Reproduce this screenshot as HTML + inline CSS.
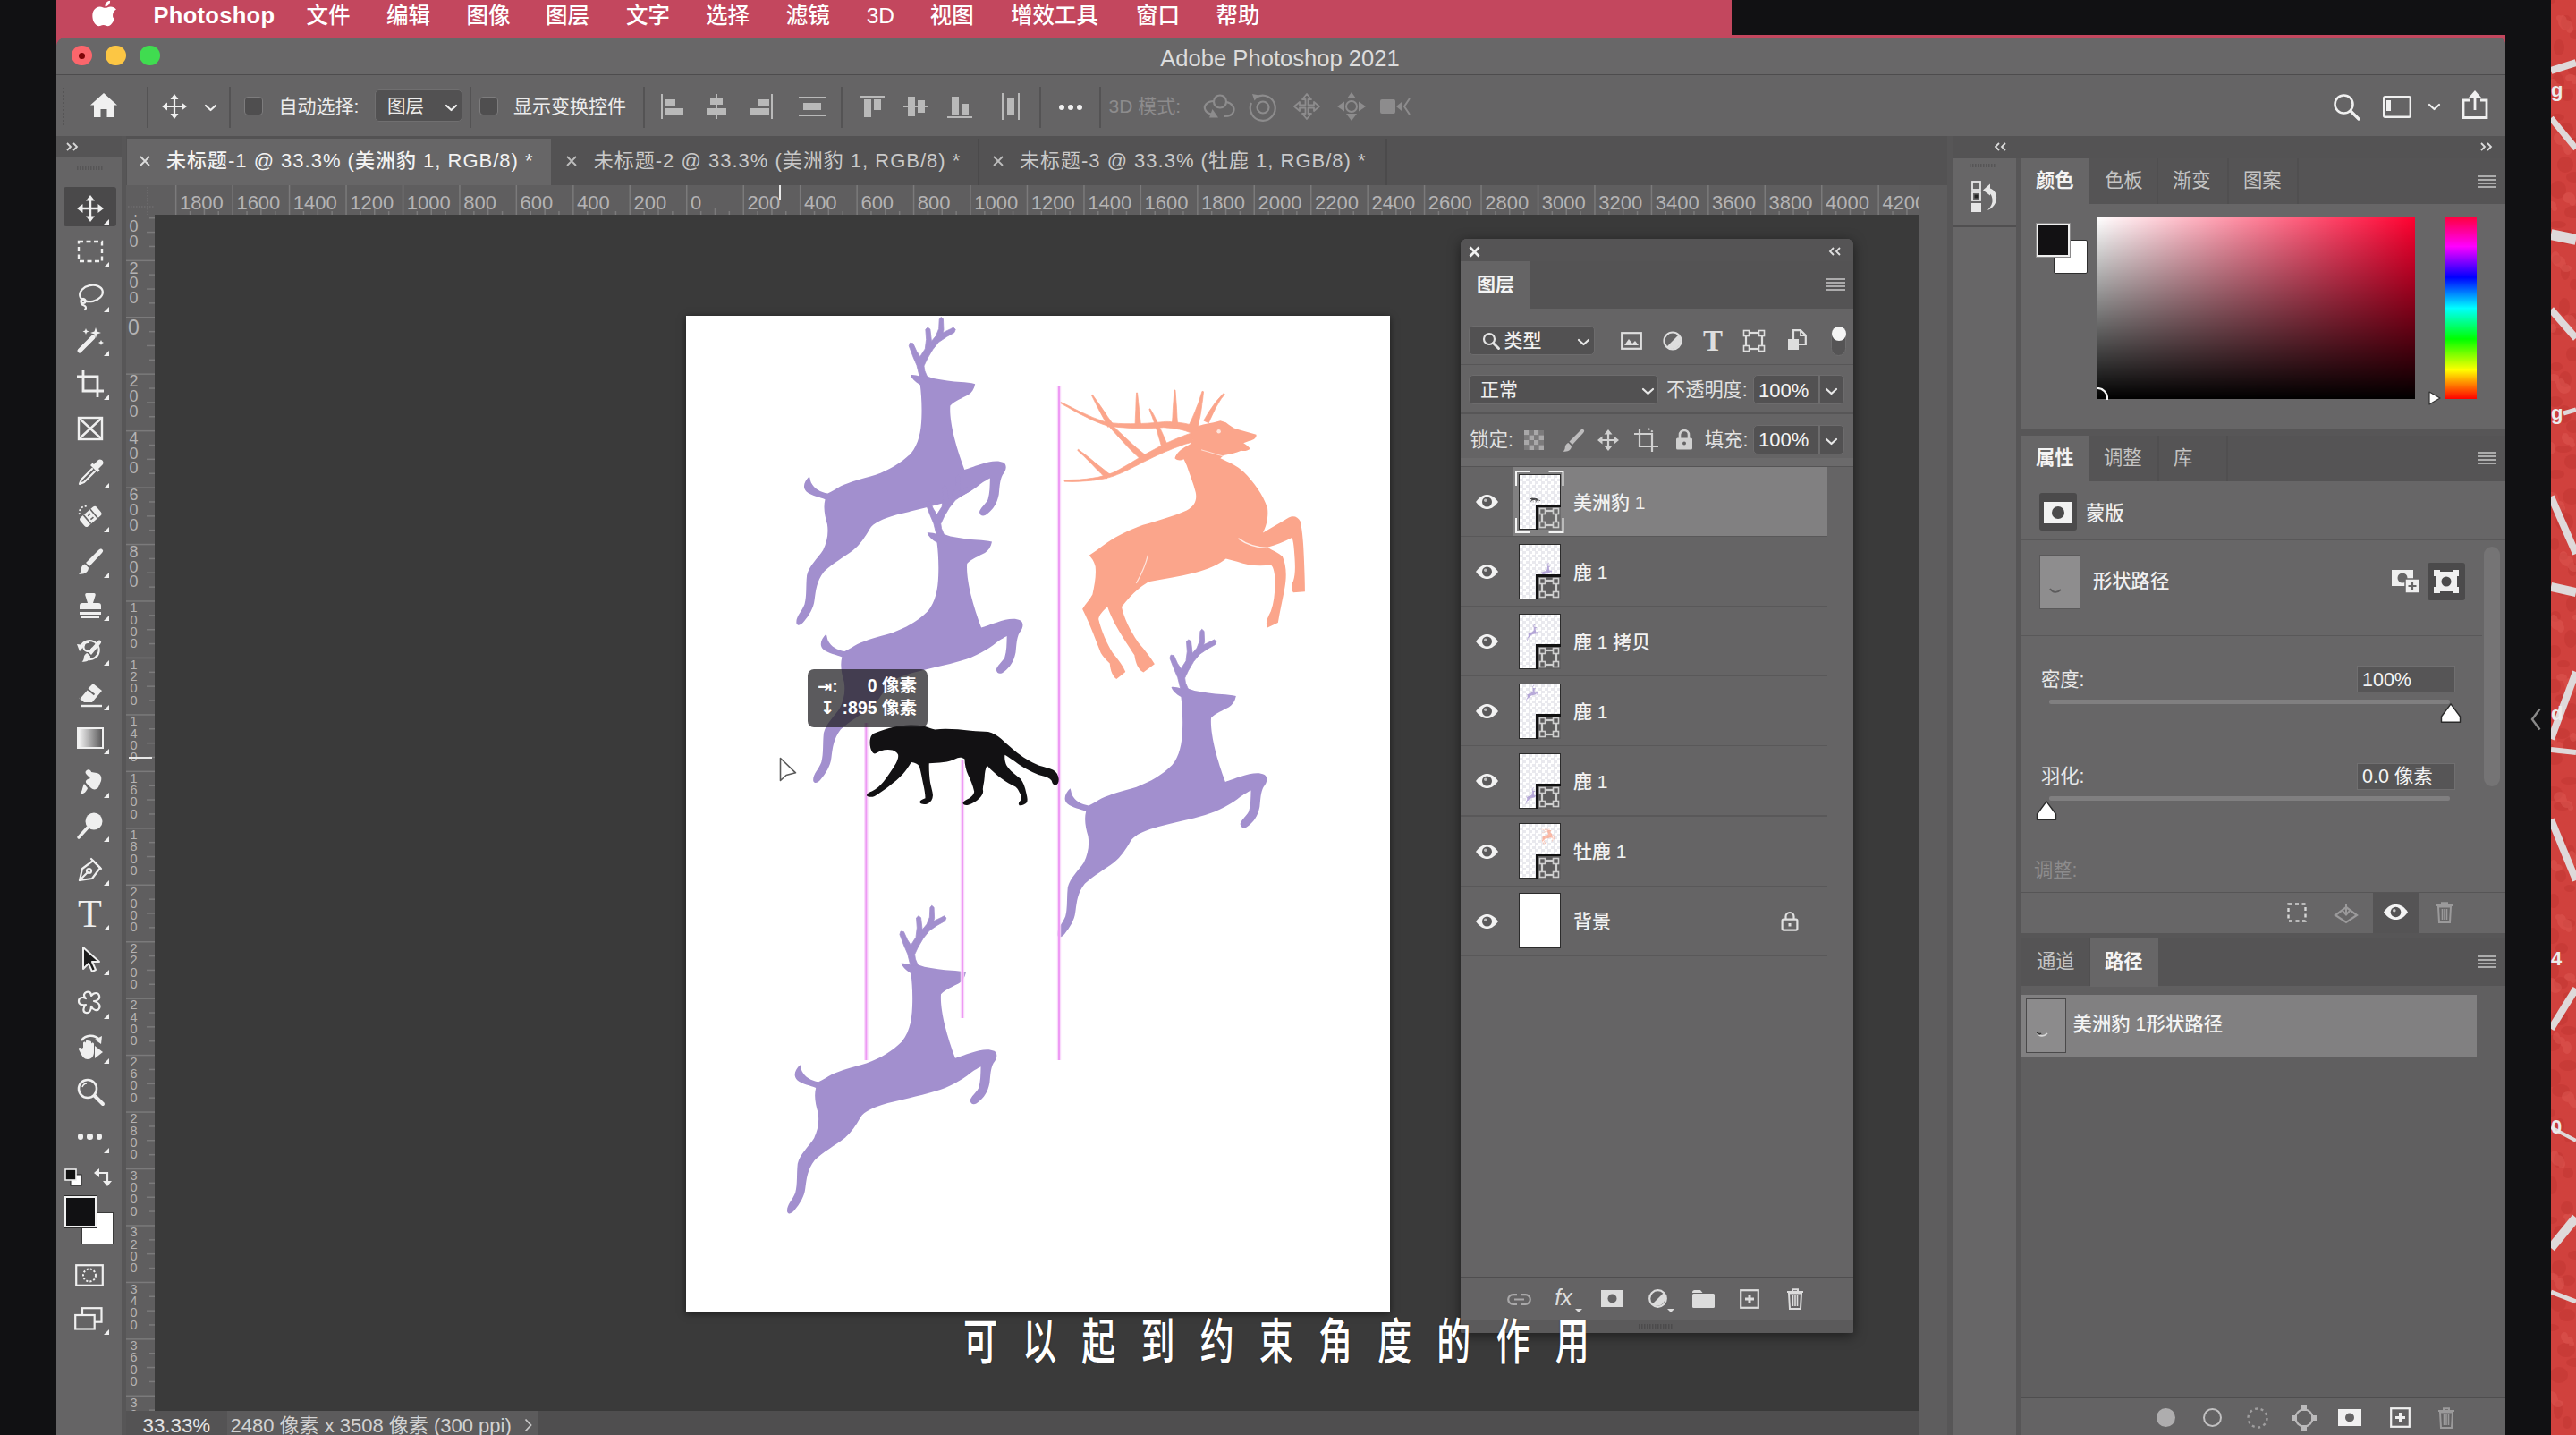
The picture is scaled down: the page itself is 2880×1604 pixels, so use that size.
<!DOCTYPE html>
<html lang="zh"><head><meta charset="utf-8"><title>Adobe Photoshop 2021</title>
<style>
html,body{margin:0;padding:0;background:#111113;}
#root{position:relative;width:2880px;height:1604px;overflow:hidden;background:#111113;font-family:"Liberation Sans","Noto Sans CJK SC",sans-serif;}
#root div,#root svg{position:absolute;box-sizing:border-box;}
#root svg{overflow:visible;}
</style></head><body><div id="root">
<div style="left:2852px;top:0px;width:28px;height:1604px;background:#d0413d;"></div>
<svg style="left:2852px;top:0px;overflow:hidden;" width="28" height="1604" viewBox="0 0 28 1604"><g fill="#c23633" opacity=".5"><ellipse cx="0" cy="0" rx="5" ry="4"/><ellipse cx="9" cy="53" rx="6" ry="9"/><ellipse cx="18" cy="106" rx="7" ry="7"/><ellipse cx="27" cy="159" rx="8" ry="5"/><ellipse cx="8" cy="212" rx="9" ry="10"/><ellipse cx="17" cy="265" rx="10" ry="8"/><ellipse cx="26" cy="318" rx="5" ry="6"/><ellipse cx="7" cy="371" rx="6" ry="4"/><ellipse cx="16" cy="424" rx="7" ry="9"/><ellipse cx="25" cy="477" rx="8" ry="7"/><ellipse cx="6" cy="530" rx="9" ry="5"/><ellipse cx="15" cy="583" rx="10" ry="10"/><ellipse cx="24" cy="636" rx="5" ry="8"/><ellipse cx="5" cy="689" rx="6" ry="6"/><ellipse cx="14" cy="742" rx="7" ry="4"/><ellipse cx="23" cy="795" rx="8" ry="9"/><ellipse cx="4" cy="848" rx="9" ry="7"/><ellipse cx="13" cy="901" rx="10" ry="5"/><ellipse cx="22" cy="954" rx="5" ry="10"/><ellipse cx="3" cy="1007" rx="6" ry="8"/><ellipse cx="12" cy="1060" rx="7" ry="6"/><ellipse cx="21" cy="1113" rx="8" ry="4"/><ellipse cx="2" cy="1166" rx="9" ry="9"/><ellipse cx="11" cy="1219" rx="10" ry="7"/><ellipse cx="20" cy="1272" rx="5" ry="5"/><ellipse cx="1" cy="1325" rx="6" ry="10"/><ellipse cx="10" cy="1378" rx="7" ry="8"/><ellipse cx="19" cy="1431" rx="8" ry="6"/><ellipse cx="0" cy="1484" rx="9" ry="4"/><ellipse cx="9" cy="1537" rx="10" ry="9"/><ellipse cx="18" cy="1590" rx="5" ry="7"/><ellipse cx="27" cy="39" rx="6" ry="5"/><ellipse cx="8" cy="92" rx="7" ry="10"/><ellipse cx="17" cy="145" rx="8" ry="8"/><ellipse cx="26" cy="198" rx="9" ry="6"/><ellipse cx="7" cy="251" rx="10" ry="4"/><ellipse cx="16" cy="304" rx="5" ry="9"/><ellipse cx="25" cy="357" rx="6" ry="7"/><ellipse cx="6" cy="410" rx="7" ry="5"/><ellipse cx="15" cy="463" rx="8" ry="10"/><ellipse cx="24" cy="516" rx="9" ry="8"/><ellipse cx="5" cy="569" rx="10" ry="6"/><ellipse cx="14" cy="622" rx="5" ry="4"/><ellipse cx="23" cy="675" rx="6" ry="9"/><ellipse cx="4" cy="728" rx="7" ry="7"/><ellipse cx="13" cy="781" rx="8" ry="5"/><ellipse cx="22" cy="834" rx="9" ry="10"/><ellipse cx="3" cy="887" rx="10" ry="8"/><ellipse cx="12" cy="940" rx="5" ry="6"/><ellipse cx="21" cy="993" rx="6" ry="4"/><ellipse cx="2" cy="1046" rx="7" ry="9"/><ellipse cx="11" cy="1099" rx="8" ry="7"/><ellipse cx="20" cy="1152" rx="9" ry="5"/><ellipse cx="1" cy="1205" rx="10" ry="10"/><ellipse cx="10" cy="1258" rx="5" ry="8"/><ellipse cx="19" cy="1311" rx="6" ry="6"/><ellipse cx="0" cy="1364" rx="7" ry="4"/><ellipse cx="9" cy="1417" rx="8" ry="9"/><ellipse cx="18" cy="1470" rx="9" ry="7"/><ellipse cx="27" cy="1523" rx="10" ry="5"/><ellipse cx="8" cy="1576" rx="5" ry="10"/><ellipse cx="17" cy="25" rx="6" ry="8"/><ellipse cx="26" cy="78" rx="7" ry="6"/><ellipse cx="7" cy="131" rx="8" ry="4"/><ellipse cx="16" cy="184" rx="9" ry="9"/><ellipse cx="25" cy="237" rx="10" ry="7"/><ellipse cx="6" cy="290" rx="5" ry="5"/><ellipse cx="15" cy="343" rx="6" ry="10"/><ellipse cx="24" cy="396" rx="7" ry="8"/><ellipse cx="5" cy="449" rx="8" ry="6"/><ellipse cx="14" cy="502" rx="9" ry="4"/><ellipse cx="23" cy="555" rx="10" ry="9"/><ellipse cx="4" cy="608" rx="5" ry="7"/><ellipse cx="13" cy="661" rx="6" ry="5"/><ellipse cx="22" cy="714" rx="7" ry="10"/><ellipse cx="3" cy="767" rx="8" ry="8"/><ellipse cx="12" cy="820" rx="9" ry="6"/><ellipse cx="21" cy="873" rx="10" ry="4"/><ellipse cx="2" cy="926" rx="5" ry="9"/><ellipse cx="11" cy="979" rx="6" ry="7"/><ellipse cx="20" cy="1032" rx="7" ry="5"/><ellipse cx="1" cy="1085" rx="8" ry="10"/><ellipse cx="10" cy="1138" rx="9" ry="8"/><ellipse cx="19" cy="1191" rx="10" ry="6"/><ellipse cx="0" cy="1244" rx="5" ry="4"/><ellipse cx="9" cy="1297" rx="6" ry="9"/><ellipse cx="18" cy="1350" rx="7" ry="7"/><ellipse cx="27" cy="1403" rx="8" ry="5"/><ellipse cx="8" cy="1456" rx="9" ry="10"/><ellipse cx="17" cy="1509" rx="10" ry="8"/></g><g fill="#e05a55" opacity=".45"><ellipse cx="9" cy="20" rx="3" ry="3"/><ellipse cx="22" cy="87" rx="6" ry="4"/><ellipse cx="7" cy="154" rx="4" ry="5"/><ellipse cx="20" cy="221" rx="7" ry="6"/><ellipse cx="5" cy="288" rx="5" ry="7"/><ellipse cx="18" cy="355" rx="3" ry="3"/><ellipse cx="3" cy="422" rx="6" ry="4"/><ellipse cx="16" cy="489" rx="4" ry="5"/><ellipse cx="1" cy="556" rx="7" ry="6"/><ellipse cx="14" cy="623" rx="5" ry="7"/><ellipse cx="27" cy="690" rx="3" ry="3"/><ellipse cx="12" cy="757" rx="6" ry="4"/><ellipse cx="25" cy="824" rx="4" ry="5"/><ellipse cx="10" cy="891" rx="7" ry="6"/><ellipse cx="23" cy="958" rx="5" ry="7"/><ellipse cx="8" cy="1025" rx="3" ry="3"/><ellipse cx="21" cy="1092" rx="6" ry="4"/><ellipse cx="6" cy="1159" rx="4" ry="5"/><ellipse cx="19" cy="1226" rx="7" ry="6"/><ellipse cx="4" cy="1293" rx="5" ry="7"/><ellipse cx="17" cy="1360" rx="3" ry="3"/><ellipse cx="2" cy="1427" rx="6" ry="4"/><ellipse cx="15" cy="1494" rx="4" ry="5"/><ellipse cx="0" cy="1561" rx="7" ry="6"/><ellipse cx="13" cy="24" rx="5" ry="7"/><ellipse cx="26" cy="91" rx="3" ry="3"/><ellipse cx="11" cy="158" rx="6" ry="4"/><ellipse cx="24" cy="225" rx="4" ry="5"/><ellipse cx="9" cy="292" rx="7" ry="6"/><ellipse cx="22" cy="359" rx="5" ry="7"/><ellipse cx="7" cy="426" rx="3" ry="3"/><ellipse cx="20" cy="493" rx="6" ry="4"/><ellipse cx="5" cy="560" rx="4" ry="5"/><ellipse cx="18" cy="627" rx="7" ry="6"/><ellipse cx="3" cy="694" rx="5" ry="7"/><ellipse cx="16" cy="761" rx="3" ry="3"/><ellipse cx="1" cy="828" rx="6" ry="4"/><ellipse cx="14" cy="895" rx="4" ry="5"/><ellipse cx="27" cy="962" rx="7" ry="6"/><ellipse cx="12" cy="1029" rx="5" ry="7"/><ellipse cx="25" cy="1096" rx="3" ry="3"/><ellipse cx="10" cy="1163" rx="6" ry="4"/><ellipse cx="23" cy="1230" rx="4" ry="5"/><ellipse cx="8" cy="1297" rx="7" ry="6"/><ellipse cx="21" cy="1364" rx="5" ry="7"/><ellipse cx="6" cy="1431" rx="3" ry="3"/><ellipse cx="19" cy="1498" rx="6" ry="4"/><ellipse cx="4" cy="1565" rx="4" ry="5"/><ellipse cx="17" cy="28" rx="7" ry="6"/><ellipse cx="2" cy="95" rx="5" ry="7"/><ellipse cx="15" cy="162" rx="3" ry="3"/><ellipse cx="0" cy="229" rx="6" ry="4"/><ellipse cx="13" cy="296" rx="4" ry="5"/><ellipse cx="26" cy="363" rx="7" ry="6"/><ellipse cx="11" cy="430" rx="5" ry="7"/><ellipse cx="24" cy="497" rx="3" ry="3"/><ellipse cx="9" cy="564" rx="6" ry="4"/><ellipse cx="22" cy="631" rx="4" ry="5"/><ellipse cx="7" cy="698" rx="7" ry="6"/><ellipse cx="20" cy="765" rx="5" ry="7"/><ellipse cx="5" cy="832" rx="3" ry="3"/><ellipse cx="18" cy="899" rx="6" ry="4"/><ellipse cx="3" cy="966" rx="4" ry="5"/><ellipse cx="16" cy="1033" rx="7" ry="6"/><ellipse cx="1" cy="1100" rx="5" ry="7"/><ellipse cx="14" cy="1167" rx="3" ry="3"/><ellipse cx="27" cy="1234" rx="6" ry="4"/><ellipse cx="12" cy="1301" rx="4" ry="5"/><ellipse cx="25" cy="1368" rx="7" ry="6"/><ellipse cx="10" cy="1435" rx="5" ry="7"/><ellipse cx="23" cy="1502" rx="3" ry="3"/><ellipse cx="8" cy="1569" rx="6" ry="4"/><ellipse cx="21" cy="32" rx="4" ry="5"/><ellipse cx="6" cy="99" rx="7" ry="6"/><ellipse cx="19" cy="166" rx="5" ry="7"/><ellipse cx="4" cy="233" rx="3" ry="3"/><ellipse cx="17" cy="300" rx="6" ry="4"/><ellipse cx="2" cy="367" rx="4" ry="5"/><ellipse cx="15" cy="434" rx="7" ry="6"/><ellipse cx="0" cy="501" rx="5" ry="7"/><ellipse cx="13" cy="568" rx="3" ry="3"/><ellipse cx="26" cy="635" rx="6" ry="4"/><ellipse cx="11" cy="702" rx="4" ry="5"/><ellipse cx="24" cy="769" rx="7" ry="6"/><ellipse cx="9" cy="836" rx="5" ry="7"/><ellipse cx="22" cy="903" rx="3" ry="3"/><ellipse cx="7" cy="970" rx="6" ry="4"/><ellipse cx="20" cy="1037" rx="4" ry="5"/><ellipse cx="5" cy="1104" rx="7" ry="6"/><ellipse cx="18" cy="1171" rx="5" ry="7"/></g><g stroke="#dfd9da" fill="none"><path d="M0 79L28 70" stroke-width="8"/><path d="M0 132L28 166" stroke-width="7"/><path d="M0 262L28 268" stroke-width="12"/><path d="M0 346L28 378" stroke-width="8"/><path d="M14 462L28 458" stroke-width="5"/><path d="M0 555L28 619" stroke-width="8"/><path d="M0 656L28 662" stroke-width="10"/><path d="M0 826L28 751" stroke-width="8"/><path d="M0 838L28 841" stroke-width="6"/><path d="M0 916L28 984" stroke-width="8"/><path d="M0 1150L28 1105" stroke-width="8"/><path d="M0 1260L28 1275" stroke-width="4"/><path d="M0 1395L28 1361" stroke-width="10"/><path d="M0 1444L28 1455" stroke-width="5"/></g></svg>
<div style="left:63px;top:0px;width:1873px;height:54px;background:#c3475e;"></div>
<div style="left:63px;top:39px;width:2738px;height:12px;background:#c3475e;"></div>
<svg style="left:102.0px;top:0.5px;" width="30" height="34" viewBox="0 0 30 34"><path fill="#fff" d="M21.6 1c.2 2-.6 3.800-1.700 5.100-1.200 1.400-3 2.400-4.800 2.300-.2-1.900.7-3.900 1.800-5.100C18.100 1.900 20.100 1 21.600 1zM27.500 24.400c-.8 1.900-1.200 2.700-2.300 4.400-1.500 2.300-3.600 5.200-6.200 5.200-2.300 0-2.900-1.500-6.100-1.500-3.100 0-3.800 1.500-6.100 1.500-2.600 0-4.600-2.600-6.100-4.900C-1.700 24.400-2.200 17.100.600 13.100c1.900-2.800 4.900-4.500 7.700-4.500 2.900 0 4.700 1.600 7.100 1.600 2.300 0 3.700-1.600 7.100-1.600 2.500 0 5.200 1.400 7.100 3.700-6.200 3.400-5.200 12.300-2.100 12.100z" transform="translate(2.500,-1) scale(.86)"/></svg>
<div style="top:-1.7px;height:38px;line-height:38px;font-size:25.5px;color:#fff;white-space:nowrap;font-weight:700;left:171.5px;letter-spacing:.300px;">Photoshop</div>
<div style="top:-1.2px;height:37px;line-height:37px;font-size:24.5px;color:#fff;white-space:nowrap;font-weight:500;left:342.6px;">文件</div>
<div style="top:-1.2px;height:37px;line-height:37px;font-size:24.5px;color:#fff;white-space:nowrap;font-weight:500;left:432px;">编辑</div>
<div style="top:-1.2px;height:37px;line-height:37px;font-size:24.5px;color:#fff;white-space:nowrap;font-weight:500;left:521.5px;">图像</div>
<div style="top:-1.2px;height:37px;line-height:37px;font-size:24.5px;color:#fff;white-space:nowrap;font-weight:500;left:610px;">图层</div>
<div style="top:-1.2px;height:37px;line-height:37px;font-size:24.5px;color:#fff;white-space:nowrap;font-weight:500;left:700px;">文字</div>
<div style="top:-1.2px;height:37px;line-height:37px;font-size:24.5px;color:#fff;white-space:nowrap;font-weight:500;left:789px;">选择</div>
<div style="top:-1.2px;height:37px;line-height:37px;font-size:24.5px;color:#fff;white-space:nowrap;font-weight:500;left:878.7px;">滤镜</div>
<div style="top:-1.2px;height:37px;line-height:37px;font-size:24.5px;color:#fff;white-space:nowrap;font-weight:500;left:968.7px;">3D</div>
<div style="top:-1.2px;height:37px;line-height:37px;font-size:24.5px;color:#fff;white-space:nowrap;font-weight:500;left:1039.7px;">视图</div>
<div style="top:-1.2px;height:37px;line-height:37px;font-size:24.5px;color:#fff;white-space:nowrap;font-weight:500;left:1130px;">增效工具</div>
<div style="top:-1.2px;height:37px;line-height:37px;font-size:24.5px;color:#fff;white-space:nowrap;font-weight:500;left:1270px;">窗口</div>
<div style="top:-1.2px;height:37px;line-height:37px;font-size:24.5px;color:#fff;white-space:nowrap;font-weight:500;left:1359.4px;">帮助</div>
<div style="left:63px;top:42px;width:2738px;height:1562px;background:#656465;border-radius:10px 8px 0 0;"></div>
<div style="left:63px;top:42px;width:2738px;height:41px;background:#686768;border-radius:10px 8px 0 0;"></div>
<div style="left:63px;top:83px;width:2738px;height:1px;background:#4d4c4d;"></div>
<div style="left:80.3px;top:50.7px;width:22.6px;height:22.6px;background:#fb666c;border-radius:50%;"></div>
<div style="left:118.10000000000001px;top:50.7px;width:22.6px;height:22.6px;background:#fcc644;border-radius:50%;"></div>
<div style="left:156.2px;top:50.7px;width:22.6px;height:22.6px;background:#40dc50;border-radius:50%;"></div>
<div style="left:88.1px;top:58.5px;width:7px;height:7px;background:#7e0508;border-radius:50%;"></div>
<div style="top:45.5px;height:38px;line-height:38px;font-size:25.6px;color:#dcdcdc;white-space:nowrap;left:931px;width:1000px;text-align:center;">Adobe Photoshop 2021</div>
<div style="left:63px;top:84px;width:2738px;height:68px;background:#656465;"></div>
<div style="left:63px;top:152px;width:2738px;height:1452px;background:#575657;"></div>
<div style="left:63px;top:152px;width:73px;height:24px;background:#555455;"></div>
<div style="left:63px;top:176px;width:73px;height:1428px;background:#656465;"></div>
<div style="left:141px;top:152px;width:2036px;height:55px;background:#535253;"></div>
<div style="left:141px;top:207px;width:2005px;height:33px;background:#5f5e5f;"></div>
<div style="left:141px;top:240px;width:32px;height:1337px;background:#5f5e5f;"></div>
<div style="left:173px;top:240px;width:1973px;height:1337px;background:#3a3a3a;"></div>
<div style="left:2146px;top:207px;width:31px;height:1397px;background:#5e5d5e;"></div>
<div style="left:141px;top:1577px;width:2005px;height:27px;background:#4f4e4f;"></div>
<div style="left:2183px;top:152px;width:618px;height:25px;background:#545354;"></div>
<div style="left:2183px;top:177px;width:71px;height:1427px;background:#676667;"></div>
<div style="left:2183px;top:252px;width:71px;height:2px;background:#504f50;"></div>
<svg style="left:68px;top:98px;" width="6" height="42" viewBox="0 0 6 42"><path d="M3 0V42" stroke="#565556" stroke-width="2" stroke-dasharray="2 2"/></svg>
<svg style="left:101.0px;top:103.5px;" width="30" height="28" viewBox="0 0 30 28"><path fill="#f0f0f0" d="M15 0 L30 13.500 L26 13.500 L26 27 L18.500 27 L18.500 18 L11.500 18 L11.500 27 L4 27 L4 13.500 L0 13.500 Z"/></svg>
<div style="left:164px;top:97px;width:2px;height:46px;background:#545354;"></div>
<div style="left:256px;top:97px;width:2px;height:46px;background:#545354;"></div>
<div style="left:525px;top:97px;width:2px;height:46px;background:#545354;"></div>
<div style="left:718.5px;top:97px;width:2px;height:46px;background:#545354;"></div>
<div style="left:940px;top:97px;width:2px;height:46px;background:#545354;"></div>
<div style="left:1162px;top:97px;width:2px;height:46px;background:#545354;"></div>
<div style="left:1229px;top:97px;width:2px;height:46px;background:#545354;"></div>
<svg style="left:181.0px;top:104.5px;" width="28" height="28" viewBox="0 0 28 28"><g fill="none" stroke="#f0f0f0" stroke-width="2.200"><path d="M14 2V26M2 14H26"/></g><path fill="#f0f0f0" d="M14 0l4.500 6h-9zM14 28l4.500-6h-9zM0 14l6-4.500v9zM28 14l-6-4.500v9z"/></svg>
<svg style="left:228.5px;top:116.5px;" width="13" height="7" viewBox="0 0 13 7"><path d="M1 1L6.5 6L12 1" fill="none" stroke="#f0f0f0" stroke-width="2.2" stroke-linecap="round" stroke-linejoin="round"/></svg>
<div style="left:272.5px;top:108px;width:21px;height:21px;background:#4f4e4f;border:1.500px solid #7d7c7d;border-radius:4px;"></div>
<div style="left:536px;top:108px;width:21px;height:21px;background:#4f4e4f;border:1.500px solid #7d7c7d;border-radius:4px;"></div>
<div style="top:102.5px;height:32px;line-height:32px;font-size:21px;color:#ececec;white-space:nowrap;left:311.5px;">自动选择:</div>
<div style="left:419px;top:100px;width:98px;height:36px;background:#525152;border:1.500px solid #706f70;border-radius:5px;"></div>
<div style="top:103.0px;height:31px;line-height:31px;font-size:20.5px;color:#ececec;white-space:nowrap;left:433px;">图层</div>
<svg style="left:498.0px;top:116.5px;" width="13" height="7" viewBox="0 0 13 7"><path d="M1 1L6.5 6L12 1" fill="none" stroke="#f0f0f0" stroke-width="2.2" stroke-linecap="round" stroke-linejoin="round"/></svg>
<div style="top:102.5px;height:32px;line-height:32px;font-size:21px;color:#ececec;white-space:nowrap;left:574px;">显示变换控件</div>
<svg style="left:737.7px;top:104.5px;" width="28" height="28" viewBox="0 0 28 28"><g fill="#b9b9b9"><rect x="1" y="0" width="2" height="28"/><rect x="5" y="6" width="12" height="7"/><rect x="5" y="16" width="21" height="7"/></g></svg>
<svg style="left:787.0px;top:104.5px;" width="28" height="28" viewBox="0 0 28 28"><g fill="#b9b9b9"><rect x="13" y="0" width="2" height="28"/><rect x="7" y="5" width="14" height="7"/><rect x="3" y="16" width="22" height="7"/></g></svg>
<svg style="left:837.0px;top:104.5px;" width="28" height="28" viewBox="0 0 28 28"><g fill="#b9b9b9"><rect x="25" y="0" width="2" height="28"/><rect x="11" y="6" width="12" height="7"/><rect x="2" y="16" width="21" height="7"/></g></svg>
<svg style="left:893.0px;top:104.5px;" width="30" height="28" viewBox="0 0 30 28"><g fill="#b9b9b9"><rect x="0" y="3" width="30" height="2"/><rect x="0" y="23" width="30" height="2"/><rect x="5" y="10" width="20" height="8"/></g></svg>
<svg style="left:960.7px;top:104.5px;" width="28" height="28" viewBox="0 0 28 28"><g fill="#b9b9b9"><rect x="0" y="2" width="28" height="2"/><rect x="5" y="6" width="8" height="20"/><rect x="16" y="6" width="8" height="12"/></g></svg>
<svg style="left:1010.0px;top:104.5px;" width="28" height="28" viewBox="0 0 28 28"><g fill="#b9b9b9"><rect x="0" y="13" width="28" height="2"/><rect x="5" y="3" width="8" height="22"/><rect x="16" y="7" width="8" height="14"/></g></svg>
<svg style="left:1059.0px;top:104.5px;" width="28" height="28" viewBox="0 0 28 28"><g fill="#b9b9b9"><rect x="0" y="25" width="28" height="2"/><rect x="5" y="3" width="8" height="20"/><rect x="16" y="11" width="8" height="12"/></g></svg>
<svg style="left:1116.4px;top:103.5px;" width="28" height="30" viewBox="0 0 28 30"><g fill="#b9b9b9"><rect x="4" y="0" width="2" height="30"/><rect x="22" y="0" width="2" height="30"/><rect x="10" y="5" width="8" height="20"/></g></svg>
<div style="left:1183.6px;top:116.5px;width:6.5px;height:6.5px;background:#f0f0f0;border-radius:50%;"></div>
<div style="left:1193.6px;top:116.5px;width:6.5px;height:6.5px;background:#f0f0f0;border-radius:50%;"></div>
<div style="left:1203.6px;top:116.5px;width:6.5px;height:6.5px;background:#f0f0f0;border-radius:50%;"></div>
<div style="top:102.5px;height:32px;line-height:32px;font-size:21px;color:#8d8c8d;white-space:nowrap;left:1239.5px;">3D 模式:</div>
<svg style="left:1344.5px;top:105.0px;" width="36" height="27" viewBox="0 0 36 27"><g fill="none" stroke="#8d8c8d" stroke-width="2.200" stroke-linecap="round"><circle cx="19" cy="8.500" r="7"/><path d="M12 8C5 8 0 13 2.500 18C4 21 7 22 9 22.500"/><path d="M26 9C32 10 36 15 34 20C32.500 24 28 25 24 25"/></g><path fill="#8d8c8d" d="M7 26.500L17 26.500L10.500 17z"/></svg>
<svg style="left:1396.0px;top:102.5px;" width="32" height="32" viewBox="0 0 32 32"><g fill="none" stroke="#8d8c8d" stroke-width="2.200"><circle cx="16" cy="17" r="6.500"/><path d="M9 5.500A14 14 0 1 1 3 12"/></g><path fill="#8d8c8d" d="M4 2l8 1.500-5.500 6z"/></svg>
<svg style="left:1446.0px;top:103.5px;" width="30" height="30" viewBox="0 0 30 30"><g fill="none" stroke="#8d8c8d" stroke-width="1.800" stroke-linejoin="round"><path d="M15 1l5 6h-3.500v6.500H23V10l6 5-6 5v-3.500h-6.500V23H20l-5 6-5-6h3.500v-6.500H7V20l-6-5 6-5v3.500h6.500V7H10z"/></g></svg>
<svg style="left:1494.5px;top:102.5px;" width="32" height="32" viewBox="0 0 32 32"><g fill="#8d8c8d"><path d="M16 0l5 7h-10zM16 32l6-8h-12zM0 16l8-5.500v11zM32 16l-8-5.500v11z"/></g><circle cx="16" cy="16" r="6" fill="none" stroke="#8d8c8d" stroke-width="2"/></svg>
<svg style="left:1543.0px;top:107.5px;" width="34" height="22" viewBox="0 0 34 22"><rect x="0" y="3" width="17" height="16" rx="2" fill="#8d8c8d"/><path fill="#8d8c8d" d="M18 11l6-5v10z"/><path d="M33 2l-6 9 6 9" fill="none" stroke="#8d8c8d" stroke-width="2"/></svg>
<svg style="left:2608.0px;top:103.5px;" width="30" height="30" viewBox="0 0 30 30"><circle cx="12.500" cy="12.500" r="10" fill="none" stroke="#f0f0f0" stroke-width="2.600"/><path d="M20 20l9 9" stroke="#f0f0f0" stroke-width="3.200" stroke-linecap="round"/></svg>
<svg style="left:2664.0px;top:107.0px;" width="32" height="25" viewBox="0 0 32 25"><rect x="1.200" y="1.200" width="29.600" height="22.600" rx="1.500" fill="none" stroke="#f0f0f0" stroke-width="2.400"/><rect x="4" y="5" width="5" height="12" fill="#f0f0f0"/></svg>
<svg style="left:2715.2px;top:116.0px;" width="13" height="7" viewBox="0 0 13 7"><path d="M1 1L6.5 6L12 1" fill="none" stroke="#f0f0f0" stroke-width="2.2" stroke-linecap="round" stroke-linejoin="round"/></svg>
<svg style="left:2752.0px;top:100.5px;" width="30" height="32" viewBox="0 0 30 32"><path d="M9 11H2V30.500H28V11H21" fill="none" stroke="#f0f0f0" stroke-width="2.800"/><path d="M15 22V4" stroke="#f0f0f0" stroke-width="2.800"/><path fill="#f0f0f0" d="M15 0l7 8h-14z"/></svg>
<svg style="left:73.5px;top:159.0px;" width="13" height="10" viewBox="0 0 13 10"><path d="M1 1l4 4-4 4M8 1l4 4-4 4" fill="none" stroke="#d8d8d8" stroke-width="1.800"/></svg>
<svg style="left:86px;top:186px;" width="30" height="4" viewBox="0 0 30 4"><path d="M0 2H30" stroke="#565556" stroke-width="4" stroke-dasharray="1.500 1.500"/></svg>
<div style="left:70.5px;top:209px;width:59.5px;height:44px;background:#4a494a;border-radius:3px;"></div>
<svg style="left:84.5px;top:216.5px;" width="32" height="32" viewBox="0 0 32 32"><g fill="none" stroke="#efefef" stroke-width="2.400"><path d="M16 4V28M4 16H28"/></g><path fill="#efefef" d="M16 1l5 6.500h-10zM16 31l5-6.500h-10zM1 16l6.500-5v10zM31 16l-6.500-5v10z"/></svg>
<svg style="left:115.5px;top:244.5px;" width="6" height="6" viewBox="0 0 6 6"><path d="M6 0V6H0z" fill="#efefef"/></svg>
<svg style="left:84.5px;top:265.0px;" width="32" height="32" viewBox="0 0 32 32"><rect x="3" y="5" width="26" height="22" fill="none" stroke="#efefef" stroke-width="2.400" stroke-dasharray="5 3.500"/></svg>
<svg style="left:115.5px;top:293px;" width="6" height="6" viewBox="0 0 6 6"><path d="M6 0V6H0z" fill="#efefef"/></svg>
<svg style="left:84.5px;top:314.5px;" width="32" height="32" viewBox="0 0 32 32"><g fill="none" stroke="#efefef" stroke-width="2.200" stroke-linecap="round" stroke-linejoin="round"><ellipse cx="17" cy="13" rx="13" ry="9" transform="rotate(-12 17 13)"/><path d="M8 19c-3 2-3 6 0 7s4 3 2 5"/><circle cx="8" cy="21.500" r="2.500"/></g></svg>
<svg style="left:115.5px;top:342.5px;" width="6" height="6" viewBox="0 0 6 6"><path d="M6 0V6H0z" fill="#efefef"/></svg>
<svg style="left:84.5px;top:363.5px;" width="32" height="32" viewBox="0 0 32 32"><path d="M4 28L19 13" stroke="#efefef" stroke-width="5" stroke-linecap="round"/><path fill="#efefef" d="M22 2l1.500 4.500L28 8l-4.500 1.500L22 14l-1.500-4.500L16 8l4.500-1.500zM11 3l1 2.500 2.500 1-2.500 1-1 2.500-1-2.500-2.500-1 2.500-1zM28 16l1 2 2 1-2 1-1 2-1-2-2-1 2-1z"/></svg>
<svg style="left:115.5px;top:391.5px;" width="6" height="6" viewBox="0 0 6 6"><path d="M6 0V6H0z" fill="#efefef"/></svg>
<svg style="left:84.5px;top:412.5px;" width="32" height="32" viewBox="0 0 32 32"><g fill="none" stroke="#efefef" stroke-width="2.800"><path d="M8 1V24H31M1 8H24V31"/></g></svg>
<svg style="left:115.5px;top:440.5px;" width="6" height="6" viewBox="0 0 6 6"><path d="M6 0V6H0z" fill="#efefef"/></svg>
<svg style="left:84.5px;top:463.0px;" width="32" height="32" viewBox="0 0 32 32"><g fill="none" stroke="#efefef" stroke-width="2.400"><rect x="3" y="4" width="26" height="24"/><path d="M3 4L29 28M29 4L3 28"/></g></svg>
<svg style="left:84.5px;top:512.0px;" width="32" height="32" viewBox="0 0 32 32"><path fill="#efefef" d="M25 2c3-2 7 2 5 5l-5 5 1.500 1.500-2.500 2.500-8-8 2.500-2.500 1.500 1.500z"/><path d="M18 12L6 24l-2 5 5-2 12-12" fill="none" stroke="#efefef" stroke-width="2.200" stroke-linecap="round" stroke-linejoin="round"/></svg>
<svg style="left:115.5px;top:540px;" width="6" height="6" viewBox="0 0 6 6"><path d="M6 0V6H0z" fill="#efefef"/></svg>
<svg style="left:84.5px;top:561.0px;" width="32" height="32" viewBox="0 0 32 32"><g transform="rotate(-40 16 16)"><rect x="4" y="10" width="24" height="13" rx="3" fill="#efefef"/><g stroke="#656465" stroke-width="1.600"><path d="M11 10v13M21 10v13M14 14h4M14 19h4"/></g></g><path d="M4 14a7 7 0 0 1 8-9" fill="none" stroke="#efefef" stroke-width="1.800" stroke-dasharray="2 2"/></svg>
<svg style="left:115.5px;top:589px;" width="6" height="6" viewBox="0 0 6 6"><path d="M6 0V6H0z" fill="#efefef"/></svg>
<svg style="left:84.5px;top:611.5px;" width="32" height="32" viewBox="0 0 32 32"><path fill="#efefef" d="M29 2c2 1 1 3 0 4L15 21l-4-4L25 3c1-1 3-2 4-1zM10 18.500l4 4c0 5-5 8-11 7 3-2 2-4 3-7 .5-2 2-3.500 4-4z"/></svg>
<svg style="left:115.5px;top:639.5px;" width="6" height="6" viewBox="0 0 6 6"><path d="M6 0V6H0z" fill="#efefef"/></svg>
<svg style="left:84.5px;top:660.0px;" width="32" height="32" viewBox="0 0 32 32"><path fill="#efefef" d="M12 3h8c2 0 2 2 1.500 3L19 14h6c2 0 3 1 3 3v4H4v-4c0-2 1-3 3-3h6L10.500 6C10 5 10 3 12 3z"/><rect x="4" y="24" width="24" height="3" fill="#efefef"/><rect x="6" y="29" width="20" height="2" fill="#efefef"/></svg>
<svg style="left:115.5px;top:688px;" width="6" height="6" viewBox="0 0 6 6"><path d="M6 0V6H0z" fill="#efefef"/></svg>
<svg style="left:84.5px;top:709.5px;" width="32" height="32" viewBox="0 0 32 32"><path fill="#efefef" d="M27 6c2 1 1 3 0 4L17 22l-3.500-3.500L24 7c1-1 2-2 3-1zM12.500 20l3.500 3.500c0 4-4 7-9.500 6 2.500-1.500 2-3.500 2.500-6 .5-1.500 1.800-3 3.500-3.500z"/><path d="M5 14a10.500 10.500 0 1 1 9 13" fill="none" stroke="#efefef" stroke-width="2.200" stroke-linecap="round" stroke-linejoin="round"/><path d="M14 8a5 5 0 1 0 4 7" fill="none" stroke="#efefef" stroke-width="2.200" stroke-linecap="round" stroke-linejoin="round"/><path fill="#efefef" d="M1 10l9 1-6 7z"/></svg>
<svg style="left:115.5px;top:737.5px;" width="6" height="6" viewBox="0 0 6 6"><path d="M6 0V6H0z" fill="#efefef"/></svg>
<svg style="left:84.5px;top:759.5px;" width="32" height="32" viewBox="0 0 32 32"><path fill="#efefef" d="M19 4l10 8-11 13H9L3 20z"/><path d="M3.500 20.500l9-10.500 8 6.500" fill="none" stroke="#656465" stroke-width="2"/><path d="M6 29H29" stroke="#efefef" stroke-width="2.400"/></svg>
<svg style="left:115.5px;top:787.5px;" width="6" height="6" viewBox="0 0 6 6"><path d="M6 0V6H0z" fill="#efefef"/></svg>
<div style="left:85.5px;top:812.5px;width:30px;height:24px;background:linear-gradient(90deg,#f4f4f4,#5a595a);border:2px solid #f0f0f0;"></div>
<svg style="left:115.5px;top:836.5px;" width="6" height="6" viewBox="0 0 6 6"><path d="M6 0V6H0z" fill="#efefef"/></svg>
<svg style="left:84.5px;top:858.0px;" width="32" height="32" viewBox="0 0 32 32"><path fill="#efefef" d="M12 3c2-2 5 0 5 2l6 1c5 1 6 5 5 9l-3 7c-2 3-6 3-8 1l-5-5c-2-2-1-4 1-5l3-1-4-4c-2-2-2-4 0-5z"/><path fill="#efefef" d="M9 18l4 5c-1 3-4 7-9 7 3-3 3-8 5-12z"/></svg>
<svg style="left:115.5px;top:886px;" width="6" height="6" viewBox="0 0 6 6"><path d="M6 0V6H0z" fill="#efefef"/></svg>
<svg style="left:84.5px;top:906.5px;" width="32" height="32" viewBox="0 0 32 32"><circle cx="20" cy="11" r="9.500" fill="#efefef"/><path d="M13 18L3 29" stroke="#efefef" stroke-width="3.500" stroke-linecap="round"/></svg>
<svg style="left:115.5px;top:934.5px;" width="6" height="6" viewBox="0 0 6 6"><path d="M6 0V6H0z" fill="#efefef"/></svg>
<svg style="left:84.5px;top:955.5px;" width="32" height="32" viewBox="0 0 32 32"><g fill="none" stroke="#efefef" stroke-width="2.200" stroke-linecap="round" stroke-linejoin="round"><path d="M4 28l3-13 12-9 8 8-9 12z"/><path d="M4 28l9-9"/><circle cx="14.500" cy="17.500" r="2.500"/><path d="M17 4l11 11"/></g></svg>
<svg style="left:115.5px;top:983.5px;" width="6" height="6" viewBox="0 0 6 6"><path d="M6 0V6H0z" fill="#efefef"/></svg>
<div style="left:80.5px;top:998px;width:40px;height:48px;line-height:48px;text-align:center;font-family:'Liberation Serif',serif;font-size:44px;color:#efefef;">T</div>
<svg style="left:115.5px;top:1034px;" width="6" height="6" viewBox="0 0 6 6"><path d="M6 0V6H0z" fill="#efefef"/></svg>
<svg style="left:84.5px;top:1055.5px;" width="32" height="32" viewBox="0 0 32 32"><path d="M8 3v24l6-6 4 9 4-2-4-9h8z" fill="#1c1c1c" stroke="#efefef" stroke-width="2" stroke-linejoin="round"/></svg>
<svg style="left:115.5px;top:1083.5px;" width="6" height="6" viewBox="0 0 6 6"><path d="M6 0V6H0z" fill="#efefef"/></svg>
<svg style="left:84.5px;top:1105.0px;" width="32" height="32" viewBox="0 0 32 32"><path d="M10 5c3-3 7-1 7 3 3-4 8-4 9 0s-3 6-6 6c4 1 8 4 6 8s-7 2-9-2c0 4-2 8-6 7s-3-6 0-9c-4 1-8 0-8-4s4-5 8-3c-2-2-3-4-1-6z" fill="none" stroke="#efefef" stroke-width="2.200" stroke-linecap="round" stroke-linejoin="round"/></svg>
<svg style="left:115.5px;top:1133px;" width="6" height="6" viewBox="0 0 6 6"><path d="M6 0V6H0z" fill="#efefef"/></svg>
<svg style="left:84.5px;top:1155.0px;" width="32" height="32" viewBox="0 0 32 32"><path fill="#efefef" d="M8 16v-5c0-2 3-2 3 0V9c0-2 3-2 3 0v1c0-2 3-2 3 0v2c0-2 3-2 3 0v9c0 5-3 8-7 8s-6-3-8-7l-2-4c-1-2 2-3 3-1z"/><path fill="#efefef" d="M21 14l9 7-9 7z"/><path d="M6 8a13 13 0 0 1 20-1" fill="none" stroke="#efefef" stroke-width="2.400"/><path fill="#efefef" d="M29 3l-1 9-7-5z"/></svg>
<svg style="left:115.5px;top:1183px;" width="6" height="6" viewBox="0 0 6 6"><path d="M6 0V6H0z" fill="#efefef"/></svg>
<svg style="left:84.5px;top:1203.5px;" width="32" height="32" viewBox="0 0 32 32"><circle cx="13" cy="13" r="10" fill="none" stroke="#efefef" stroke-width="2.600"/><path d="M7 11a6 6 0 0 1 5-4" fill="none" stroke="#efefef" stroke-width="1.600"/><path d="M21 21l9 9" stroke="#efefef" stroke-width="4" stroke-linecap="round"/></svg>
<div style="left:86.8px;top:1267.3px;width:6.4px;height:6.4px;background:#efefef;border-radius:50%;"></div>
<div style="left:97.3px;top:1267.3px;width:6.4px;height:6.4px;background:#efefef;border-radius:50%;"></div>
<div style="left:107.8px;top:1267.3px;width:6.4px;height:6.4px;background:#efefef;border-radius:50%;"></div>
<svg style="left:115.5px;top:1282.5px;" width="6" height="6" viewBox="0 0 6 6"><path d="M6 0V6H0z" fill="#efefef"/></svg>
<svg style="left:72px;top:1306px;" width="20" height="20" viewBox="0 0 20 20"><rect x="7" y="7" width="12" height="12" fill="#fff" stroke="#222" stroke-width="1"/><rect x="1" y="1" width="12" height="12" fill="#111" stroke="#eee" stroke-width="1.600"/></svg>
<svg style="left:105px;top:1305px;" width="21" height="21" viewBox="0 0 21 21"><path d="M5 6H15V17" fill="none" stroke="#efefef" stroke-width="2.200"/><path fill="#efefef" d="M0 6l6-5v10zM15 21l-5-6h10z"/></svg>
<div style="left:90.5px;top:1355px;width:36.5px;height:35.5px;background:#fff;border:1.500px solid #3a3a3a;"></div>
<div style="left:72px;top:1336.5px;width:36px;height:35px;background:#111113;border:2px solid #f2f2f2;outline:1.500px solid #2c2c2c;"></div>
<svg style="left:84.0px;top:1412.5px;" width="32" height="25" viewBox="0 0 32 25"><rect x="1.200" y="1.200" width="29.600" height="22.600" fill="none" stroke="#efefef" stroke-width="2.200"/><circle cx="16" cy="12.500" r="7" fill="none" stroke="#efefef" stroke-width="2" stroke-dasharray="2.200 2"/></svg>
<svg style="left:83.0px;top:1461.0px;" width="32" height="26" viewBox="0 0 32 26"><rect x="9" y="1.200" width="21.500" height="15.500" fill="#656465" stroke="#efefef" stroke-width="2.200"/><rect x="1.200" y="9" width="21.500" height="15.500" fill="#656465" stroke="#efefef" stroke-width="2.200"/></svg>
<svg style="left:115.5px;top:1486px;" width="6" height="6" viewBox="0 0 6 6"><path d="M6 0V6H0z" fill="#efefef"/></svg>
<div style="left:141.7px;top:154.5px;width:474px;height:52.5px;background:#676667;"></div>
<svg style="left:155.6px;top:174.0px;" width="12" height="12" viewBox="0 0 12 12"><path d="M1 1L11 11M11 1L1 11" stroke="#dcdcdc" stroke-width="1.800"/></svg>
<div style="top:162.5px;height:33px;line-height:33px;font-size:22px;color:#f2f2f2;white-space:nowrap;font-weight:500;left:186px;letter-spacing:1px;">未标题-1 @ 33.3% (美洲豹 1, RGB/8) *</div>
<svg style="left:632.7px;top:174.0px;" width="12" height="12" viewBox="0 0 12 12"><path d="M1 1L11 11M11 1L1 11" stroke="#bdbdbd" stroke-width="1.800"/></svg>
<div style="top:162.5px;height:33px;line-height:33px;font-size:22px;color:#c9c9c9;white-space:nowrap;left:663.8px;letter-spacing:1px;">未标题-2 @ 33.3% (美洲豹 1, RGB/8) *</div>
<div style="left:1093px;top:154.5px;width:2px;height:52.5px;background:#4b4a4b;"></div>
<svg style="left:1110.0px;top:174.0px;" width="12" height="12" viewBox="0 0 12 12"><path d="M1 1L11 11M11 1L1 11" stroke="#bdbdbd" stroke-width="1.800"/></svg>
<div style="top:162.5px;height:33px;line-height:33px;font-size:22px;color:#c9c9c9;white-space:nowrap;left:1140px;letter-spacing:1px;">未标题-3 @ 33.3% (牡鹿 1, RGB/8) *</div>
<div style="left:1549px;top:154.5px;width:2px;height:52.5px;background:#4b4a4b;"></div>
<svg style="left:141px;top:240px;overflow:hidden" width="32" height="1337" viewBox="0 0 32 1337" font-family="Liberation Sans,sans-serif"><rect x="0" y="-12.9" width="32" height="1.500" fill="#7b7a7b"/><rect x="26" y="3.0" width="6" height="1.500" fill="#7b7a7b"/><rect x="23" y="18.8" width="9" height="1.500" fill="#7b7a7b"/><rect x="26" y="34.7" width="6" height="1.500" fill="#7b7a7b"/><text x="8.500" y="2.1" font-size="18" fill="#b4b3b4" text-anchor="middle">4</text><text x="8.500" y="18.8" font-size="18" fill="#b4b3b4" text-anchor="middle">0</text><text x="8.500" y="35.5" font-size="18" fill="#b4b3b4" text-anchor="middle">0</text><rect x="0" y="50.6" width="32" height="1.500" fill="#7b7a7b"/><rect x="26" y="66.4" width="6" height="1.500" fill="#7b7a7b"/><rect x="23" y="82.3" width="9" height="1.500" fill="#7b7a7b"/><rect x="26" y="98.1" width="6" height="1.500" fill="#7b7a7b"/><text x="8.500" y="65.6" font-size="18" fill="#b4b3b4" text-anchor="middle">2</text><text x="8.500" y="82.2" font-size="18" fill="#b4b3b4" text-anchor="middle">0</text><text x="8.500" y="98.9" font-size="18" fill="#b4b3b4" text-anchor="middle">0</text><rect x="0" y="114.0" width="32" height="1.500" fill="#7b7a7b"/><rect x="26" y="129.9" width="6" height="1.500" fill="#7b7a7b"/><rect x="23" y="145.7" width="9" height="1.500" fill="#7b7a7b"/><rect x="26" y="161.6" width="6" height="1.500" fill="#7b7a7b"/><text x="8.500" y="134.0" font-size="23" fill="#b4b3b4" text-anchor="middle">0</text><rect x="0" y="177.4" width="32" height="1.500" fill="#7b7a7b"/><rect x="26" y="193.3" width="6" height="1.500" fill="#7b7a7b"/><rect x="23" y="209.2" width="9" height="1.500" fill="#7b7a7b"/><rect x="26" y="225.0" width="6" height="1.500" fill="#7b7a7b"/><text x="8.500" y="192.4" font-size="18" fill="#b4b3b4" text-anchor="middle">2</text><text x="8.500" y="209.1" font-size="18" fill="#b4b3b4" text-anchor="middle">0</text><text x="8.500" y="225.8" font-size="18" fill="#b4b3b4" text-anchor="middle">0</text><rect x="0" y="240.9" width="32" height="1.500" fill="#7b7a7b"/><rect x="26" y="256.8" width="6" height="1.500" fill="#7b7a7b"/><rect x="23" y="272.6" width="9" height="1.500" fill="#7b7a7b"/><rect x="26" y="288.5" width="6" height="1.500" fill="#7b7a7b"/><text x="8.500" y="255.9" font-size="18" fill="#b4b3b4" text-anchor="middle">4</text><text x="8.500" y="272.6" font-size="18" fill="#b4b3b4" text-anchor="middle">0</text><text x="8.500" y="289.3" font-size="18" fill="#b4b3b4" text-anchor="middle">0</text><rect x="0" y="304.4" width="32" height="1.500" fill="#7b7a7b"/><rect x="26" y="320.2" width="6" height="1.500" fill="#7b7a7b"/><rect x="23" y="336.1" width="9" height="1.500" fill="#7b7a7b"/><rect x="26" y="351.9" width="6" height="1.500" fill="#7b7a7b"/><text x="8.500" y="319.4" font-size="18" fill="#b4b3b4" text-anchor="middle">6</text><text x="8.500" y="336.1" font-size="18" fill="#b4b3b4" text-anchor="middle">0</text><text x="8.500" y="352.8" font-size="18" fill="#b4b3b4" text-anchor="middle">0</text><rect x="0" y="367.8" width="32" height="1.500" fill="#7b7a7b"/><rect x="26" y="383.7" width="6" height="1.500" fill="#7b7a7b"/><rect x="23" y="399.5" width="9" height="1.500" fill="#7b7a7b"/><rect x="26" y="415.4" width="6" height="1.500" fill="#7b7a7b"/><text x="8.500" y="382.8" font-size="18" fill="#b4b3b4" text-anchor="middle">8</text><text x="8.500" y="399.5" font-size="18" fill="#b4b3b4" text-anchor="middle">0</text><text x="8.500" y="416.2" font-size="18" fill="#b4b3b4" text-anchor="middle">0</text><rect x="0" y="431.2" width="32" height="1.500" fill="#7b7a7b"/><rect x="26" y="447.1" width="6" height="1.500" fill="#7b7a7b"/><rect x="23" y="463.0" width="9" height="1.500" fill="#7b7a7b"/><rect x="26" y="478.8" width="6" height="1.500" fill="#7b7a7b"/><text x="8.500" y="444.2" font-size="14.5" fill="#b4b3b4" text-anchor="middle">1</text><text x="8.500" y="457.5" font-size="14.5" fill="#b4b3b4" text-anchor="middle">0</text><text x="8.500" y="470.9" font-size="14.5" fill="#b4b3b4" text-anchor="middle">0</text><text x="8.500" y="484.1" font-size="14.5" fill="#b4b3b4" text-anchor="middle">0</text><rect x="0" y="494.7" width="32" height="1.500" fill="#7b7a7b"/><rect x="26" y="510.6" width="6" height="1.500" fill="#7b7a7b"/><rect x="23" y="526.4" width="9" height="1.500" fill="#7b7a7b"/><rect x="26" y="542.3" width="6" height="1.500" fill="#7b7a7b"/><text x="8.500" y="507.7" font-size="14.5" fill="#b4b3b4" text-anchor="middle">1</text><text x="8.500" y="521.0" font-size="14.5" fill="#b4b3b4" text-anchor="middle">2</text><text x="8.500" y="534.3" font-size="14.5" fill="#b4b3b4" text-anchor="middle">0</text><text x="8.500" y="547.6" font-size="14.5" fill="#b4b3b4" text-anchor="middle">0</text><rect x="0" y="558.2" width="32" height="1.500" fill="#7b7a7b"/><rect x="26" y="574.0" width="6" height="1.500" fill="#7b7a7b"/><rect x="23" y="589.9" width="9" height="1.500" fill="#7b7a7b"/><rect x="26" y="605.7" width="6" height="1.500" fill="#7b7a7b"/><text x="8.500" y="571.2" font-size="14.5" fill="#b4b3b4" text-anchor="middle">1</text><text x="8.500" y="584.5" font-size="14.5" fill="#b4b3b4" text-anchor="middle">4</text><text x="8.500" y="597.8" font-size="14.5" fill="#b4b3b4" text-anchor="middle">0</text><text x="8.500" y="611.1" font-size="14.5" fill="#b4b3b4" text-anchor="middle">0</text><rect x="0" y="621.6" width="32" height="1.500" fill="#7b7a7b"/><rect x="26" y="637.5" width="6" height="1.500" fill="#7b7a7b"/><rect x="23" y="653.3" width="9" height="1.500" fill="#7b7a7b"/><rect x="26" y="669.2" width="6" height="1.500" fill="#7b7a7b"/><text x="8.500" y="634.6" font-size="14.5" fill="#b4b3b4" text-anchor="middle">1</text><text x="8.500" y="647.9" font-size="14.5" fill="#b4b3b4" text-anchor="middle">6</text><text x="8.500" y="661.2" font-size="14.5" fill="#b4b3b4" text-anchor="middle">0</text><text x="8.500" y="674.5" font-size="14.5" fill="#b4b3b4" text-anchor="middle">0</text><rect x="0" y="685.1" width="32" height="1.500" fill="#7b7a7b"/><rect x="26" y="700.9" width="6" height="1.500" fill="#7b7a7b"/><rect x="23" y="716.8" width="9" height="1.500" fill="#7b7a7b"/><rect x="26" y="732.6" width="6" height="1.500" fill="#7b7a7b"/><text x="8.500" y="698.1" font-size="14.5" fill="#b4b3b4" text-anchor="middle">1</text><text x="8.500" y="711.4" font-size="14.5" fill="#b4b3b4" text-anchor="middle">8</text><text x="8.500" y="724.7" font-size="14.5" fill="#b4b3b4" text-anchor="middle">0</text><text x="8.500" y="738.0" font-size="14.5" fill="#b4b3b4" text-anchor="middle">0</text><rect x="0" y="748.5" width="32" height="1.500" fill="#7b7a7b"/><rect x="26" y="764.4" width="6" height="1.500" fill="#7b7a7b"/><rect x="23" y="780.2" width="9" height="1.500" fill="#7b7a7b"/><rect x="26" y="796.1" width="6" height="1.500" fill="#7b7a7b"/><text x="8.500" y="761.5" font-size="14.5" fill="#b4b3b4" text-anchor="middle">2</text><text x="8.500" y="774.8" font-size="14.5" fill="#b4b3b4" text-anchor="middle">0</text><text x="8.500" y="788.1" font-size="14.5" fill="#b4b3b4" text-anchor="middle">0</text><text x="8.500" y="801.4" font-size="14.5" fill="#b4b3b4" text-anchor="middle">0</text><rect x="0" y="812.0" width="32" height="1.500" fill="#7b7a7b"/><rect x="26" y="827.8" width="6" height="1.500" fill="#7b7a7b"/><rect x="23" y="843.7" width="9" height="1.500" fill="#7b7a7b"/><rect x="26" y="859.5" width="6" height="1.500" fill="#7b7a7b"/><text x="8.500" y="825.0" font-size="14.5" fill="#b4b3b4" text-anchor="middle">2</text><text x="8.500" y="838.2" font-size="14.5" fill="#b4b3b4" text-anchor="middle">2</text><text x="8.500" y="851.5" font-size="14.5" fill="#b4b3b4" text-anchor="middle">0</text><text x="8.500" y="864.9" font-size="14.5" fill="#b4b3b4" text-anchor="middle">0</text><rect x="0" y="875.4" width="32" height="1.500" fill="#7b7a7b"/><rect x="26" y="891.3" width="6" height="1.500" fill="#7b7a7b"/><rect x="23" y="907.1" width="9" height="1.500" fill="#7b7a7b"/><rect x="26" y="923.0" width="6" height="1.500" fill="#7b7a7b"/><text x="8.500" y="888.4" font-size="14.5" fill="#b4b3b4" text-anchor="middle">2</text><text x="8.500" y="901.7" font-size="14.5" fill="#b4b3b4" text-anchor="middle">4</text><text x="8.500" y="915.0" font-size="14.5" fill="#b4b3b4" text-anchor="middle">0</text><text x="8.500" y="928.3" font-size="14.5" fill="#b4b3b4" text-anchor="middle">0</text><rect x="0" y="938.8" width="32" height="1.500" fill="#7b7a7b"/><rect x="26" y="954.7" width="6" height="1.500" fill="#7b7a7b"/><rect x="23" y="970.6" width="9" height="1.500" fill="#7b7a7b"/><rect x="26" y="986.4" width="6" height="1.500" fill="#7b7a7b"/><text x="8.500" y="951.8" font-size="14.5" fill="#b4b3b4" text-anchor="middle">2</text><text x="8.500" y="965.1" font-size="14.5" fill="#b4b3b4" text-anchor="middle">6</text><text x="8.500" y="978.4" font-size="14.5" fill="#b4b3b4" text-anchor="middle">0</text><text x="8.500" y="991.8" font-size="14.5" fill="#b4b3b4" text-anchor="middle">0</text><rect x="0" y="1002.3" width="32" height="1.500" fill="#7b7a7b"/><rect x="26" y="1018.2" width="6" height="1.500" fill="#7b7a7b"/><rect x="23" y="1034.0" width="9" height="1.500" fill="#7b7a7b"/><rect x="26" y="1049.9" width="6" height="1.500" fill="#7b7a7b"/><text x="8.500" y="1015.3" font-size="14.5" fill="#b4b3b4" text-anchor="middle">2</text><text x="8.500" y="1028.6" font-size="14.5" fill="#b4b3b4" text-anchor="middle">8</text><text x="8.500" y="1041.9" font-size="14.5" fill="#b4b3b4" text-anchor="middle">0</text><text x="8.500" y="1055.2" font-size="14.5" fill="#b4b3b4" text-anchor="middle">0</text><rect x="0" y="1065.8" width="32" height="1.500" fill="#7b7a7b"/><rect x="26" y="1081.6" width="6" height="1.500" fill="#7b7a7b"/><rect x="23" y="1097.5" width="9" height="1.500" fill="#7b7a7b"/><rect x="26" y="1113.3" width="6" height="1.500" fill="#7b7a7b"/><text x="8.500" y="1078.8" font-size="14.5" fill="#b4b3b4" text-anchor="middle">3</text><text x="8.500" y="1092.0" font-size="14.5" fill="#b4b3b4" text-anchor="middle">0</text><text x="8.500" y="1105.3" font-size="14.5" fill="#b4b3b4" text-anchor="middle">0</text><text x="8.500" y="1118.7" font-size="14.5" fill="#b4b3b4" text-anchor="middle">0</text><rect x="0" y="1129.2" width="32" height="1.500" fill="#7b7a7b"/><rect x="26" y="1145.1" width="6" height="1.500" fill="#7b7a7b"/><rect x="23" y="1160.9" width="9" height="1.500" fill="#7b7a7b"/><rect x="26" y="1176.8" width="6" height="1.500" fill="#7b7a7b"/><text x="8.500" y="1142.2" font-size="14.5" fill="#b4b3b4" text-anchor="middle">3</text><text x="8.500" y="1155.5" font-size="14.5" fill="#b4b3b4" text-anchor="middle">2</text><text x="8.500" y="1168.8" font-size="14.5" fill="#b4b3b4" text-anchor="middle">0</text><text x="8.500" y="1182.1" font-size="14.5" fill="#b4b3b4" text-anchor="middle">0</text><rect x="0" y="1192.7" width="32" height="1.500" fill="#7b7a7b"/><rect x="26" y="1208.5" width="6" height="1.500" fill="#7b7a7b"/><rect x="23" y="1224.4" width="9" height="1.500" fill="#7b7a7b"/><rect x="26" y="1240.2" width="6" height="1.500" fill="#7b7a7b"/><text x="8.500" y="1205.7" font-size="14.5" fill="#b4b3b4" text-anchor="middle">3</text><text x="8.500" y="1219.0" font-size="14.5" fill="#b4b3b4" text-anchor="middle">4</text><text x="8.500" y="1232.2" font-size="14.5" fill="#b4b3b4" text-anchor="middle">0</text><text x="8.500" y="1245.6" font-size="14.5" fill="#b4b3b4" text-anchor="middle">0</text><rect x="0" y="1256.1" width="32" height="1.500" fill="#7b7a7b"/><rect x="26" y="1272.0" width="6" height="1.500" fill="#7b7a7b"/><rect x="23" y="1287.8" width="9" height="1.500" fill="#7b7a7b"/><rect x="26" y="1303.7" width="6" height="1.500" fill="#7b7a7b"/><text x="8.500" y="1269.1" font-size="14.5" fill="#b4b3b4" text-anchor="middle">3</text><text x="8.500" y="1282.4" font-size="14.5" fill="#b4b3b4" text-anchor="middle">6</text><text x="8.500" y="1295.7" font-size="14.5" fill="#b4b3b4" text-anchor="middle">0</text><text x="8.500" y="1309.0" font-size="14.5" fill="#b4b3b4" text-anchor="middle">0</text><rect x="0" y="1319.5" width="32" height="1.500" fill="#7b7a7b"/><rect x="26" y="1335.4" width="6" height="1.500" fill="#7b7a7b"/><rect x="23" y="1351.3" width="9" height="1.500" fill="#7b7a7b"/><rect x="26" y="1367.1" width="6" height="1.500" fill="#7b7a7b"/><text x="8.500" y="1332.5" font-size="14.5" fill="#b4b3b4" text-anchor="middle">3</text><text x="8.500" y="1345.8" font-size="14.5" fill="#b4b3b4" text-anchor="middle">8</text><text x="8.500" y="1359.1" font-size="14.5" fill="#b4b3b4" text-anchor="middle">0</text><text x="8.500" y="1372.5" font-size="14.5" fill="#b4b3b4" text-anchor="middle">0</text><rect x="3" y="606" width="26" height="2" fill="#e8e8e8"/></svg>
<div style="left:141px;top:207px;width:2005px;height:33px;background:#5f5e5f;"></div>
<svg style="left:141px;top:207px;overflow:hidden" width="2005" height="33" viewBox="0 0 2005 33" font-family="Liberation Sans,sans-serif"><rect x="54.9" y="0" width="1.500" height="33" fill="#7b7a7b"/><rect x="70.8" y="29" width="1.500" height="4" fill="#7b7a7b"/><rect x="86.7" y="26" width="1.500" height="7" fill="#7b7a7b"/><rect x="102.5" y="29" width="1.500" height="4" fill="#7b7a7b"/><text x="59.9" y="26.500" font-size="22" fill="#b4b3b4">1800</text><rect x="118.4" y="0" width="1.500" height="33" fill="#7b7a7b"/><rect x="134.3" y="29" width="1.500" height="4" fill="#7b7a7b"/><rect x="150.1" y="26" width="1.500" height="7" fill="#7b7a7b"/><rect x="166.0" y="29" width="1.500" height="4" fill="#7b7a7b"/><text x="123.4" y="26.500" font-size="22" fill="#b4b3b4">1600</text><rect x="181.8" y="0" width="1.500" height="33" fill="#7b7a7b"/><rect x="197.7" y="29" width="1.500" height="4" fill="#7b7a7b"/><rect x="213.6" y="26" width="1.500" height="7" fill="#7b7a7b"/><rect x="229.4" y="29" width="1.500" height="4" fill="#7b7a7b"/><text x="186.8" y="26.500" font-size="22" fill="#b4b3b4">1400</text><rect x="245.3" y="0" width="1.500" height="33" fill="#7b7a7b"/><rect x="261.2" y="29" width="1.500" height="4" fill="#7b7a7b"/><rect x="277.0" y="26" width="1.500" height="7" fill="#7b7a7b"/><rect x="292.9" y="29" width="1.500" height="4" fill="#7b7a7b"/><text x="250.3" y="26.500" font-size="22" fill="#b4b3b4">1200</text><rect x="308.8" y="0" width="1.500" height="33" fill="#7b7a7b"/><rect x="324.6" y="29" width="1.500" height="4" fill="#7b7a7b"/><rect x="340.5" y="26" width="1.500" height="7" fill="#7b7a7b"/><rect x="356.3" y="29" width="1.500" height="4" fill="#7b7a7b"/><text x="313.8" y="26.500" font-size="22" fill="#b4b3b4">1000</text><rect x="372.2" y="0" width="1.500" height="33" fill="#7b7a7b"/><rect x="388.1" y="29" width="1.500" height="4" fill="#7b7a7b"/><rect x="403.9" y="26" width="1.500" height="7" fill="#7b7a7b"/><rect x="419.8" y="29" width="1.500" height="4" fill="#7b7a7b"/><text x="377.2" y="26.500" font-size="22" fill="#b4b3b4">800</text><rect x="435.6" y="0" width="1.500" height="33" fill="#7b7a7b"/><rect x="451.5" y="29" width="1.500" height="4" fill="#7b7a7b"/><rect x="467.4" y="26" width="1.500" height="7" fill="#7b7a7b"/><rect x="483.2" y="29" width="1.500" height="4" fill="#7b7a7b"/><text x="440.6" y="26.500" font-size="22" fill="#b4b3b4">600</text><rect x="499.1" y="0" width="1.500" height="33" fill="#7b7a7b"/><rect x="515.0" y="29" width="1.500" height="4" fill="#7b7a7b"/><rect x="530.8" y="26" width="1.500" height="7" fill="#7b7a7b"/><rect x="546.7" y="29" width="1.500" height="4" fill="#7b7a7b"/><text x="504.1" y="26.500" font-size="22" fill="#b4b3b4">400</text><rect x="562.5" y="0" width="1.500" height="33" fill="#7b7a7b"/><rect x="578.4" y="29" width="1.500" height="4" fill="#7b7a7b"/><rect x="594.3" y="26" width="1.500" height="7" fill="#7b7a7b"/><rect x="610.1" y="29" width="1.500" height="4" fill="#7b7a7b"/><text x="567.5" y="26.500" font-size="22" fill="#b4b3b4">200</text><rect x="626.0" y="0" width="1.500" height="33" fill="#7b7a7b"/><rect x="641.9" y="29" width="1.500" height="4" fill="#7b7a7b"/><rect x="657.7" y="26" width="1.500" height="7" fill="#7b7a7b"/><rect x="673.6" y="29" width="1.500" height="4" fill="#7b7a7b"/><text x="631.0" y="26.500" font-size="22" fill="#b4b3b4">0</text><rect x="689.5" y="0" width="1.500" height="33" fill="#7b7a7b"/><rect x="705.3" y="29" width="1.500" height="4" fill="#7b7a7b"/><rect x="721.2" y="26" width="1.500" height="7" fill="#7b7a7b"/><rect x="737.0" y="29" width="1.500" height="4" fill="#7b7a7b"/><text x="694.5" y="26.500" font-size="22" fill="#b4b3b4">200</text><rect x="752.9" y="0" width="1.500" height="33" fill="#7b7a7b"/><rect x="768.8" y="29" width="1.500" height="4" fill="#7b7a7b"/><rect x="784.6" y="26" width="1.500" height="7" fill="#7b7a7b"/><rect x="800.5" y="29" width="1.500" height="4" fill="#7b7a7b"/><text x="757.9" y="26.500" font-size="22" fill="#b4b3b4">400</text><rect x="816.4" y="0" width="1.500" height="33" fill="#7b7a7b"/><rect x="832.2" y="29" width="1.500" height="4" fill="#7b7a7b"/><rect x="848.1" y="26" width="1.500" height="7" fill="#7b7a7b"/><rect x="863.9" y="29" width="1.500" height="4" fill="#7b7a7b"/><text x="821.4" y="26.500" font-size="22" fill="#b4b3b4">600</text><rect x="879.8" y="0" width="1.500" height="33" fill="#7b7a7b"/><rect x="895.7" y="29" width="1.500" height="4" fill="#7b7a7b"/><rect x="911.5" y="26" width="1.500" height="7" fill="#7b7a7b"/><rect x="927.4" y="29" width="1.500" height="4" fill="#7b7a7b"/><text x="884.8" y="26.500" font-size="22" fill="#b4b3b4">800</text><rect x="943.2" y="0" width="1.500" height="33" fill="#7b7a7b"/><rect x="959.1" y="29" width="1.500" height="4" fill="#7b7a7b"/><rect x="975.0" y="26" width="1.500" height="7" fill="#7b7a7b"/><rect x="990.8" y="29" width="1.500" height="4" fill="#7b7a7b"/><text x="948.2" y="26.500" font-size="22" fill="#b4b3b4">1000</text><rect x="1006.7" y="0" width="1.500" height="33" fill="#7b7a7b"/><rect x="1022.6" y="29" width="1.500" height="4" fill="#7b7a7b"/><rect x="1038.4" y="26" width="1.500" height="7" fill="#7b7a7b"/><rect x="1054.3" y="29" width="1.500" height="4" fill="#7b7a7b"/><text x="1011.7" y="26.500" font-size="22" fill="#b4b3b4">1200</text><rect x="1070.2" y="0" width="1.500" height="33" fill="#7b7a7b"/><rect x="1086.0" y="29" width="1.500" height="4" fill="#7b7a7b"/><rect x="1101.9" y="26" width="1.500" height="7" fill="#7b7a7b"/><rect x="1117.7" y="29" width="1.500" height="4" fill="#7b7a7b"/><text x="1075.2" y="26.500" font-size="22" fill="#b4b3b4">1400</text><rect x="1133.6" y="0" width="1.500" height="33" fill="#7b7a7b"/><rect x="1149.5" y="29" width="1.500" height="4" fill="#7b7a7b"/><rect x="1165.3" y="26" width="1.500" height="7" fill="#7b7a7b"/><rect x="1181.2" y="29" width="1.500" height="4" fill="#7b7a7b"/><text x="1138.6" y="26.500" font-size="22" fill="#b4b3b4">1600</text><rect x="1197.1" y="0" width="1.500" height="33" fill="#7b7a7b"/><rect x="1212.9" y="29" width="1.500" height="4" fill="#7b7a7b"/><rect x="1228.8" y="26" width="1.500" height="7" fill="#7b7a7b"/><rect x="1244.6" y="29" width="1.500" height="4" fill="#7b7a7b"/><text x="1202.1" y="26.500" font-size="22" fill="#b4b3b4">1800</text><rect x="1260.5" y="0" width="1.500" height="33" fill="#7b7a7b"/><rect x="1276.4" y="29" width="1.500" height="4" fill="#7b7a7b"/><rect x="1292.2" y="26" width="1.500" height="7" fill="#7b7a7b"/><rect x="1308.1" y="29" width="1.500" height="4" fill="#7b7a7b"/><text x="1265.5" y="26.500" font-size="22" fill="#b4b3b4">2000</text><rect x="1324.0" y="0" width="1.500" height="33" fill="#7b7a7b"/><rect x="1339.8" y="29" width="1.500" height="4" fill="#7b7a7b"/><rect x="1355.7" y="26" width="1.500" height="7" fill="#7b7a7b"/><rect x="1371.5" y="29" width="1.500" height="4" fill="#7b7a7b"/><text x="1329.0" y="26.500" font-size="22" fill="#b4b3b4">2200</text><rect x="1387.4" y="0" width="1.500" height="33" fill="#7b7a7b"/><rect x="1403.3" y="29" width="1.500" height="4" fill="#7b7a7b"/><rect x="1419.1" y="26" width="1.500" height="7" fill="#7b7a7b"/><rect x="1435.0" y="29" width="1.500" height="4" fill="#7b7a7b"/><text x="1392.4" y="26.500" font-size="22" fill="#b4b3b4">2400</text><rect x="1450.8" y="0" width="1.500" height="33" fill="#7b7a7b"/><rect x="1466.7" y="29" width="1.500" height="4" fill="#7b7a7b"/><rect x="1482.6" y="26" width="1.500" height="7" fill="#7b7a7b"/><rect x="1498.4" y="29" width="1.500" height="4" fill="#7b7a7b"/><text x="1455.8" y="26.500" font-size="22" fill="#b4b3b4">2600</text><rect x="1514.3" y="0" width="1.500" height="33" fill="#7b7a7b"/><rect x="1530.2" y="29" width="1.500" height="4" fill="#7b7a7b"/><rect x="1546.0" y="26" width="1.500" height="7" fill="#7b7a7b"/><rect x="1561.9" y="29" width="1.500" height="4" fill="#7b7a7b"/><text x="1519.3" y="26.500" font-size="22" fill="#b4b3b4">2800</text><rect x="1577.8" y="0" width="1.500" height="33" fill="#7b7a7b"/><rect x="1593.6" y="29" width="1.500" height="4" fill="#7b7a7b"/><rect x="1609.5" y="26" width="1.500" height="7" fill="#7b7a7b"/><rect x="1625.3" y="29" width="1.500" height="4" fill="#7b7a7b"/><text x="1582.8" y="26.500" font-size="22" fill="#b4b3b4">3000</text><rect x="1641.2" y="0" width="1.500" height="33" fill="#7b7a7b"/><rect x="1657.1" y="29" width="1.500" height="4" fill="#7b7a7b"/><rect x="1672.9" y="26" width="1.500" height="7" fill="#7b7a7b"/><rect x="1688.8" y="29" width="1.500" height="4" fill="#7b7a7b"/><text x="1646.2" y="26.500" font-size="22" fill="#b4b3b4">3200</text><rect x="1704.7" y="0" width="1.500" height="33" fill="#7b7a7b"/><rect x="1720.5" y="29" width="1.500" height="4" fill="#7b7a7b"/><rect x="1736.4" y="26" width="1.500" height="7" fill="#7b7a7b"/><rect x="1752.2" y="29" width="1.500" height="4" fill="#7b7a7b"/><text x="1709.7" y="26.500" font-size="22" fill="#b4b3b4">3400</text><rect x="1768.1" y="0" width="1.500" height="33" fill="#7b7a7b"/><rect x="1784.0" y="29" width="1.500" height="4" fill="#7b7a7b"/><rect x="1799.8" y="26" width="1.500" height="7" fill="#7b7a7b"/><rect x="1815.7" y="29" width="1.500" height="4" fill="#7b7a7b"/><text x="1773.1" y="26.500" font-size="22" fill="#b4b3b4">3600</text><rect x="1831.5" y="0" width="1.500" height="33" fill="#7b7a7b"/><rect x="1847.4" y="29" width="1.500" height="4" fill="#7b7a7b"/><rect x="1863.3" y="26" width="1.500" height="7" fill="#7b7a7b"/><rect x="1879.1" y="29" width="1.500" height="4" fill="#7b7a7b"/><text x="1836.5" y="26.500" font-size="22" fill="#b4b3b4">3800</text><rect x="1895.0" y="0" width="1.500" height="33" fill="#7b7a7b"/><rect x="1910.9" y="29" width="1.500" height="4" fill="#7b7a7b"/><rect x="1926.7" y="26" width="1.500" height="7" fill="#7b7a7b"/><rect x="1942.6" y="29" width="1.500" height="4" fill="#7b7a7b"/><text x="1900.0" y="26.500" font-size="22" fill="#b4b3b4">4000</text><rect x="1958.4" y="0" width="1.500" height="33" fill="#7b7a7b"/><rect x="1974.3" y="29" width="1.500" height="4" fill="#7b7a7b"/><rect x="1990.2" y="26" width="1.500" height="7" fill="#7b7a7b"/><rect x="2006.0" y="29" width="1.500" height="4" fill="#7b7a7b"/><text x="1963.4" y="26.500" font-size="22" fill="#b4b3b4">4200</text><rect x="730" y="0" width="2" height="17" fill="#e8e8e8"/></svg>
<div style="left:141px;top:207px;width:32px;height:33px;background:#5f5e5f;"></div>
<svg style="left:141px;top:207px;" width="32" height="33" viewBox="0 0 32 33"><path d="M24 2V33M2 24H32" stroke="#6f6e6f" stroke-width="1.500" stroke-dasharray="1.500 1.500"/></svg>
<div style="left:141px;top:1577px;width:113px;height:27px;background:#545354;"></div>
<div style="left:254px;top:1577px;width:348px;height:27px;background:#5c5b5c;"></div>
<div style="top:1576.5px;height:33px;line-height:33px;font-size:22.3px;color:#e4e4e4;white-space:nowrap;left:159.5px;">33.33%</div>
<div style="top:1576.5px;height:33px;line-height:33px;font-size:22px;color:#d2d2d2;white-space:nowrap;left:257.5px;">2480 像素 x 3508 像素 (300 ppi)</div>
<svg style="left:585.5px;top:1585.0px;" width="9" height="16" viewBox="0 0 9 16"><path d="M1.500 1.500L7.500 8L1.500 14.500" fill="none" stroke="#c8c8c8" stroke-width="1.800"/></svg>
<div style="left:767px;top:353px;width:787px;height:1112.5px;background:#fff;box-shadow:0 2px 8px rgba(0,0,0,.55);"></div>
<svg style="left:0;top:0" width="2880" height="1604" viewBox="0 0 2880 1604">
<defs>
<g id="deer"><path d="M130 718 C108 740 100 765 118 782 C140 800 175 805 197 815 C188 850 196 885 206 920 C212 960 205 995 188 1030 C165 1065 130 1095 120 1135 C115 1180 120 1220 110 1258 C98 1290 72 1310 76 1338 C82 1352 96 1345 108 1330 C128 1305 148 1275 152 1240 C158 1200 160 1160 192 1120 C230 1085 275 1060 315 1030 C345 1005 365 975 385 940 C400 915 440 897 500 880 C570 862 640 848 700 830 C760 812 810 785 850 752 C868 740 885 730 893 726 C892 760 892 790 884 815 C872 838 852 850 848 868 C850 888 870 888 884 874 C905 858 922 835 930 795 C934 760 934 735 946 712 C962 692 966 672 950 660 C925 648 890 655 850 668 C825 676 800 685 785 690 C768 645 752 595 742 555 C730 505 722 455 725 420 C745 400 775 388 800 375 C815 366 826 350 830 328 C812 322 790 322 770 320 C735 318 690 312 655 305 C640 300 625 296 612 292 L596 296 C585 292 570 288 557 290 C562 305 575 318 598 332 C603 370 606 420 604 470 C602 530 592 580 560 620 C520 660 470 690 410 712 C350 730 300 742 262 760 C245 770 225 782 208 790 C178 786 150 770 138 745 C134 735 134 725 130 718 Z" fill="#a28fce"/><path d="M596 298 L584 250 L569 215 L551 168 L555 155 L568 157 L583 190 L598 213 L619 180 L624 140 L621 98 L630 90 L640 97 L646 148 L665 125 L677 95 L679 55 L686 46 L695 54 L697 100 L693 112 L725 97 L738 90 L747 98 L742 111 L710 129 L676 152 L651 183 L628 222 L614 252 L617 272 L628 298 Z" fill="#a28fce" stroke="#a28fce" stroke-width="3" stroke-linejoin="round"/></g>
</defs>
<g transform="translate(860,1000) scale(.2649)">
<use id="d1" href="#deer" transform="translate(39,-2483)"/>
<use id="d2" href="#deer" transform="translate(110,-1817)"/>
<use id="d3" href="#deer" transform="translate(1140,-1166)"/>
<use id="d4" href="#deer"/>
</g>
</svg>
<svg style="left:0;top:0" width="2880" height="1604" viewBox="0 0 2880 1604">
<g id="stag" transform="translate(1170,420) scale(.2508)">
<path d="M190 800 C215 785 235 770 255 755 C300 720 360 690 430 665 C500 645 570 625 625 600 C660 580 672 555 665 520 C655 480 638 440 625 400 L612 372 C598 380 582 378 572 368 C578 345 600 325 640 305 L652 288 C645 270 640 255 642 240 C665 225 700 215 745 208 L775 200 L800 208 C815 220 830 232 850 238 L935 262 C938 275 925 285 905 290 L878 300 C890 308 905 318 908 326 C895 336 880 336 868 334 C845 345 815 350 790 355 L775 368 C810 385 850 400 880 430 C925 475 965 530 985 590 C990 630 980 670 965 700 C1000 680 1040 655 1080 632 C1100 622 1120 626 1132 650 C1142 700 1146 760 1148 820 C1150 870 1152 920 1152 962 L1100 966 C1090 950 1090 935 1100 915 C1112 880 1108 830 1104 780 C1102 755 1100 735 1094 722 C1060 740 1020 755 985 765 C1010 780 1035 790 1052 805 C1068 840 1072 890 1062 945 C1052 1000 1040 1050 1032 1100 L985 1122 C975 1105 982 1085 1000 1050 C1015 1010 1020 960 1018 900 C1016 870 1010 850 1000 842 C950 852 900 845 850 828 L800 815 C770 840 720 862 660 878 C590 895 520 905 455 918 C420 940 380 970 335 1030 C345 1080 375 1140 410 1190 C440 1225 465 1255 482 1285 L432 1322 C410 1310 398 1285 392 1245 C370 1210 335 1160 305 1105 C290 1075 278 1050 272 1030 C250 1050 235 1065 232 1085 C245 1140 270 1195 295 1235 C320 1265 340 1290 352 1320 L312 1352 C295 1340 285 1315 282 1282 C265 1265 250 1250 242 1235 C220 1180 195 1110 160 1040 C175 1015 195 995 205 975 C215 930 222 890 218 850 C212 825 200 810 190 800 Z" fill="#fba58b"/>
<g fill="#fba58b" stroke="#fba58b" stroke-width="3" stroke-linejoin="round"><path d="M660 224 L644 219 L628 215 L613 212 L598 210 L584 208 L571 207 L557 206 L545 205 L532 205 L519 206 L497 208 L474 210 L450 212 L425 213 L399 214 L373 214 L347 214 L321 213 L295 211 L272 208 L251 202 L229 194 L207 186 L185 176 L163 166 L141 156 L119 145 L98 134 L77 124 L57 114 L55 118 L74 129 L94 140 L115 152 L137 164 L159 175 L181 186 L203 197 L225 206 L247 215 L268 222 L294 226 L319 229 L346 231 L372 233 L399 234 L425 234 L451 234 L475 233 L499 232 L521 230 L532 231 L543 232 L555 233 L567 235 L580 237 L592 239 L606 242 L620 246 L634 251 L650 256Z"/><path d="M296 215 L273 183 L251 150 L228 117 L205 85 L201 87 L219 123 L237 158 L256 193 L274 229Z"/><path d="M421 226 L417 188 L413 151 L409 113 L405 76 L401 76 L399 114 L398 151 L396 189 L395 226Z"/><path d="M585 224 L582 184 L580 144 L577 104 L574 64 L570 64 L567 104 L564 144 L562 184 L559 224Z"/><path d="M671 247 L674 231 L678 215 L681 197 L685 180 L688 162 L691 144 L693 126 L696 107 L698 89 L700 71 L694 69 L688 87 L683 104 L677 122 L670 139 L664 155 L657 172 L650 188 L643 203 L636 218 L629 233Z"/><path d="M723 210 L730 194 L737 179 L744 164 L751 150 L758 137 L765 125 L772 113 L779 102 L787 92 L794 82 L790 78 L781 87 L772 97 L763 107 L754 118 L746 129 L737 142 L728 155 L719 169 L710 184 L701 200Z"/><path d="M644 256 L626 262 L608 269 L590 276 L571 284 L553 292 L535 300 L517 309 L499 318 L481 328 L464 337 L449 345 L435 353 L421 361 L408 369 L394 377 L381 385 L368 393 L354 401 L340 409 L326 417 L311 425 L294 433 L275 440 L253 446 L230 452 L205 456 L177 460 L147 463 L115 464 L80 465 L80 471 L115 472 L147 471 L178 469 L206 467 L232 463 L256 459 L279 453 L299 447 L317 440 L334 433 L349 426 L364 419 L378 412 L392 405 L406 398 L419 391 L433 384 L447 377 L462 370 L476 363 L495 354 L513 346 L531 338 L549 331 L567 323 L585 317 L602 310 L620 304 L638 299 L656 294Z"/><path d="M450 361 L433 347 L417 334 L400 320 L384 306 L368 291 L353 277 L337 262 L321 247 L306 232 L290 217 L280 227 L294 243 L309 259 L323 275 L338 291 L353 307 L368 323 L383 338 L399 353 L414 368 L430 383Z"/><path d="M543 320 L536 301 L528 283 L520 264 L512 246 L504 229 L496 211 L488 195 L480 178 L471 162 L462 147 L458 149 L464 165 L471 182 L477 199 L483 217 L489 235 L495 253 L500 272 L506 291 L511 310 L517 330Z"/><path d="M284 440 L270 430 L257 419 L243 408 L229 397 L215 386 L201 374 L187 363 L172 351 L157 340 L142 328 L138 332 L152 345 L166 358 L179 371 L192 384 L205 397 L217 410 L230 423 L242 435 L254 447 L266 460Z"/></g>
<path d="M452 800 C440 850 420 890 400 925" fill="none" stroke="#fff" stroke-width="5" opacity=".7"/>
<path d="M855 725 C890 750 930 765 985 768" fill="none" stroke="#fff" stroke-width="6" opacity=".8"/>
<path d="M790 360 C760 350 720 340 690 330" fill="none" stroke="#fff" stroke-width="4" opacity=".6"/>
<circle cx="768" cy="248" r="9" fill="#fff" opacity=".7"/>
</g></svg>
<svg style="left:0;top:0" width="2880" height="1604" viewBox="0 0 2880 1604">
<g fill="#ee9af4"><rect x="967.200" y="808" width="2.400" height="377"/><rect x="1074.800" y="850" width="2.400" height="288"/><rect x="1182.800" y="432" width="2.400" height="753"/></g>
<g fill="#f8d6fb"><rect x="966.200" y="808" width="1" height="377"/><rect x="969.600" y="808" width="1" height="377"/><rect x="1073.800" y="850" width="1" height="288"/><rect x="1077.200" y="850" width="1" height="288"/><rect x="1181.800" y="432" width="1" height="753"/><rect x="1185.200" y="432" width="1" height="753"/></g>
<path id="pan" d="M880 680 C940 655 1000 635 1050 625 C1120 608 1220 602 1300 615 C1340 625 1370 640 1400 645 C1500 635 1600 645 1700 655 C1760 660 1810 660 1850 665 C1890 675 1925 695 1960 725 C2010 770 2045 800 2080 830 C2130 870 2200 915 2280 950 C2330 965 2365 972 2395 985 C2425 1000 2442 1030 2445 1065 C2445 1095 2435 1112 2415 1116 C2395 1112 2390 1095 2385 1078 C2370 1058 2340 1045 2300 1035 C2230 1015 2160 975 2100 935 C2060 905 2020 880 1990 860 C1985 890 1992 925 2005 950 C2030 990 2080 1030 2120 1060 C2145 1090 2160 1130 2170 1180 C2178 1215 2185 1240 2175 1262 C2160 1280 2135 1288 2112 1285 C2100 1275 2108 1260 2122 1245 C2135 1228 2125 1195 2110 1170 C2100 1150 2090 1138 2080 1130 C2040 1110 2000 1088 1970 1065 C1920 1030 1875 990 1840 950 C1825 975 1820 1010 1818 1050 C1815 1100 1800 1135 1805 1160 C1810 1180 1795 1205 1775 1225 C1750 1252 1715 1272 1680 1282 C1655 1288 1635 1280 1635 1265 C1640 1248 1665 1238 1690 1225 C1715 1208 1735 1185 1730 1165 C1720 1120 1700 1070 1680 1030 C1662 990 1650 940 1650 895 C1630 880 1610 878 1590 885 C1550 905 1510 918 1470 922 C1430 928 1385 928 1350 930 C1348 980 1352 1040 1360 1095 C1368 1135 1380 1170 1382 1200 C1380 1235 1365 1258 1340 1270 C1315 1280 1285 1280 1272 1262 C1270 1245 1290 1235 1318 1226 C1318 1190 1310 1150 1300 1105 C1290 1055 1280 1000 1268 958 C1255 935 1230 925 1200 922 C1185 945 1160 985 1130 1020 C1095 1060 1050 1095 1010 1125 C970 1155 930 1185 890 1208 C865 1218 838 1218 822 1202 C825 1185 845 1175 870 1165 C905 1148 940 1115 965 1085 C1000 1040 1040 980 1070 930 C1085 900 1092 880 1088 858 C1080 838 1060 828 1040 820 C1010 812 975 815 945 825 C925 832 905 845 890 850 C872 845 862 825 855 800 C848 770 848 740 855 715 C860 700 868 688 880 680 Z" fill="#121113" transform="translate(860,730) scale(.1324)"/>
<path d="M872.500 847.500V872.500L879 866.500L889.500 863.800Z" fill="#fff" stroke="#5a5a5a" stroke-width="1.600" stroke-linejoin="round"/>
</svg>
<div style="left:902.5px;top:747.5px;width:134px;height:65px;background:rgba(34,32,36,.74);border-radius:7px;"></div>
<div style="left:914px;top:752.5px;height:28px;line-height:28px;font-size:19.500px;color:#fff;font-weight:700;font-family:'DejaVu Sans','Liberation Sans',sans-serif;white-space:nowrap;">⇥<span style="font-family:'Liberation Sans','Noto Sans CJK SC',sans-serif">:</span></div>
<div style="top:752.0px;height:29px;line-height:29px;font-size:19.5px;color:#fff;white-space:nowrap;font-weight:700;left:25px;width:1000px;text-align:right;">0 像素</div>
<div style="left:917px;top:777.5px;height:28px;line-height:28px;font-size:19.500px;color:#fff;font-weight:700;font-family:'DejaVu Sans','Liberation Sans',sans-serif;white-space:nowrap;">↧</div>
<div style="top:777.0px;height:29px;line-height:29px;font-size:19.5px;color:#fff;white-space:nowrap;font-weight:700;left:25px;width:1000px;text-align:right;">:895 像素</div>
<div style="left:1633px;top:267px;width:439px;height:1223px;background:#656465;border-radius:7px 7px 2px 2px;box-shadow:0 3px 14px rgba(0,0,0,.5);"></div>
<div style="left:1633px;top:267px;width:439px;height:25px;background:#555455;border-radius:7px 7px 0 0;"></div>
<svg style="left:1642.0px;top:274.5px;" width="13" height="13" viewBox="0 0 13 13"><path d="M1.500 1.500L11.500 11.500M11.500 1.500L1.500 11.500" stroke="#f0f0f0" stroke-width="2.800"/></svg>
<svg style="left:2044.5px;top:276.0px;" width="13" height="10" viewBox="0 0 13 10"><path d="M5 1l-4 4 4 4M12 1l-4 4 4 4" fill="none" stroke="#e0e0e0" stroke-width="1.800"/></svg>
<div style="left:1633px;top:292px;width:439px;height:53px;background:#545354;"></div>
<div style="left:1633px;top:292px;width:77px;height:54px;background:#656465;"></div>
<div style="top:301.5px;height:32px;line-height:32px;font-size:21px;color:#f4f4f4;white-space:nowrap;font-weight:700;left:1651px;">图层</div>
<svg style="left:2042px;top:311px;" width="21" height="14" viewBox="0 0 21 14"><path d="M0 1H21M0 5H21M0 9H21M0 13H21" stroke="#c9c9c9" stroke-width="1.700"/></svg>
<div style="left:1641.5px;top:364px;width:141px;height:33px;background:#525152;border:1.500px solid #6d6c6d;border-radius:5px;"></div>
<svg style="left:1657.0px;top:371.0px;" width="20" height="20" viewBox="0 0 20 20"><circle cx="8" cy="8" r="6" fill="none" stroke="#e4e4e4" stroke-width="2.200"/><path d="M12.500 12.500L18.500 18.500" stroke="#e4e4e4" stroke-width="3" stroke-linecap="round"/></svg>
<div style="top:364.5px;height:32px;line-height:32px;font-size:21px;color:#f0f0f0;white-space:nowrap;font-weight:500;left:1681.5px;">类型</div>
<svg style="left:1763.5px;top:378.5px;" width="13" height="7" viewBox="0 0 13 7"><path d="M1 1L6.5 6L12 1" fill="none" stroke="#e8e8e8" stroke-width="2.2" stroke-linecap="round" stroke-linejoin="round"/></svg>
<svg style="left:1812.3px;top:371.0px;" width="24" height="20" viewBox="0 0 24 20"><rect x="1.200" y="1.200" width="21.600" height="17.600" fill="none" stroke="#dedede" stroke-width="2.200"/><path d="M4 15l5-7 4 5 3-3 4 5z" fill="#dedede"/></svg>
<svg style="left:1858.8px;top:370.0px;" width="22" height="22" viewBox="0 0 22 22"><circle cx="11" cy="11" r="9.500" fill="none" stroke="#dedede" stroke-width="2.200"/><path d="M4.300 17.700A9.500 9.500 0 0 0 17.700 4.300z" fill="#dedede"/></svg>
<div style="left:1901px;top:362px;width:28px;height:38px;line-height:38px;text-align:center;font-family:'Liberation Serif',serif;font-size:33px;font-weight:700;color:#dedede;">T</div>
<svg style="left:1949.0px;top:369.0px;" width="24" height="24" viewBox="0 0 24 24"><rect x="3" y="3" width="18" height="18" fill="none" stroke="#dedede" stroke-width="2.200"/><rect x="0.5" y="0.5" width="6" height="6" fill="#656465" stroke="#dedede" stroke-width="1.600"/><rect x="0.5" y="17.5" width="6" height="6" fill="#656465" stroke="#dedede" stroke-width="1.600"/><rect x="17.5" y="0.5" width="6" height="6" fill="#656465" stroke="#dedede" stroke-width="1.600"/><rect x="17.5" y="17.5" width="6" height="6" fill="#656465" stroke="#dedede" stroke-width="1.600"/></svg>
<svg style="left:1997.5px;top:368.0px;" width="22" height="24" viewBox="0 0 22 24"><path d="M7 1.200H15L20.800 7V17H7z" fill="none" stroke="#dedede" stroke-width="2.200"/><path d="M15 1v6h6" fill="none" stroke="#dedede" stroke-width="1.800"/><rect x="1" y="11" width="12" height="12" fill="#dedede"/></svg>
<div style="left:2047px;top:365px;width:17px;height:32.5px;background:#555455;border-radius:9px;border:1px solid #6e6d6e;"></div>
<div style="left:2047.5px;top:365px;width:16px;height:16px;background:#f4f4f4;border-radius:50%;"></div>
<div style="left:1633px;top:406.5px;width:439px;height:1.5px;background:#575657;"></div>
<div style="left:1641.5px;top:419px;width:212.5px;height:33px;background:#525152;border:1.500px solid #6d6c6d;border-radius:5px;"></div>
<div style="top:419.5px;height:32px;line-height:32px;font-size:21px;color:#f0f0f0;white-space:nowrap;left:1655px;">正常</div>
<svg style="left:1835.5px;top:433.5px;" width="13" height="7" viewBox="0 0 13 7"><path d="M1 1L6.5 6L12 1" fill="none" stroke="#e8e8e8" stroke-width="2.2" stroke-linecap="round" stroke-linejoin="round"/></svg>
<div style="top:419.5px;height:32px;line-height:32px;font-size:21.2px;color:#e2e2e2;white-space:nowrap;left:1863px;">不透明度:</div>
<div style="left:1960px;top:419px;width:101.5px;height:33px;background:#525152;border:1.500px solid #6d6c6d;border-radius:5px;"></div>
<div style="left:2033px;top:420px;width:1.5px;height:31px;background:#6d6c6d;"></div>
<div style="top:419.5px;height:33px;line-height:33px;font-size:22px;color:#f4f4f4;white-space:nowrap;left:1966px;">100%</div>
<svg style="left:2041.0px;top:434.0px;" width="13" height="7" viewBox="0 0 13 7"><path d="M1 1L6.5 6L12 1" fill="none" stroke="#e8e8e8" stroke-width="2.2" stroke-linecap="round" stroke-linejoin="round"/></svg>
<div style="left:1633px;top:461px;width:439px;height:1.5px;background:#575657;"></div>
<div style="top:475.5px;height:32px;line-height:32px;font-size:21.2px;color:#e2e2e2;white-space:nowrap;left:1643.5px;">锁定:</div>
<svg style="left:1704.0px;top:481.0px;" width="22" height="22" viewBox="0 0 22 22"><rect x="0" y="0" width="5.500" height="5.500" fill="#a9a8a9"/><rect x="0" y="5.5" width="5.500" height="5.500" fill="#7c7b7c"/><rect x="0" y="11" width="5.500" height="5.500" fill="#a9a8a9"/><rect x="0" y="16.5" width="5.500" height="5.500" fill="#7c7b7c"/><rect x="5.5" y="0" width="5.500" height="5.500" fill="#7c7b7c"/><rect x="5.5" y="5.5" width="5.500" height="5.500" fill="#a9a8a9"/><rect x="5.5" y="11" width="5.500" height="5.500" fill="#7c7b7c"/><rect x="5.5" y="16.5" width="5.500" height="5.500" fill="#a9a8a9"/><rect x="11" y="0" width="5.500" height="5.500" fill="#a9a8a9"/><rect x="11" y="5.5" width="5.500" height="5.500" fill="#7c7b7c"/><rect x="11" y="11" width="5.500" height="5.500" fill="#a9a8a9"/><rect x="11" y="16.5" width="5.500" height="5.500" fill="#7c7b7c"/><rect x="16.5" y="0" width="5.500" height="5.500" fill="#7c7b7c"/><rect x="16.5" y="5.5" width="5.500" height="5.500" fill="#a9a8a9"/><rect x="16.5" y="11" width="5.500" height="5.500" fill="#7c7b7c"/><rect x="16.5" y="16.5" width="5.500" height="5.500" fill="#a9a8a9"/></svg>
<svg style="left:1745.5px;top:479.0px;" width="26" height="26" viewBox="0 0 26 26"><path fill="#bdbcbd" d="M24 1c2 1 1 3 0 4L12 18l-3.500-3.500L21 2c1-1 2-2 3-1zM7.500 16l3.500 3.500c0 4-4 7-9.500 6 2.500-1.500 2-3.500 2.500-6 .5-1.500 1.800-3 3.500-3.500z"/></svg>
<svg style="left:1785.5px;top:480.0px;" width="24" height="24" viewBox="0 0 24 24"><g fill="none" stroke="#d0d0d0" stroke-width="2.200"><path d="M12 3V21M3 12H21"/></g><path fill="#d0d0d0" d="M12 0l4.500 5.500h-9zM12 24l4.500-5.500h-9zM0 12l5.500-4.500v9zM24 12l-5.500-4.500v9z"/></svg>
<svg style="left:1827.0px;top:479.0px;" width="27" height="26" viewBox="0 0 27 26"><g fill="none" stroke="#d0d0d0" stroke-width="2.200"><path d="M6 0V20H27M0 6H20V26"/><path d="M16 0l5 4" stroke-dasharray="2 2"/></g></svg>
<svg style="left:1872.5px;top:479.0px;" width="20" height="24" viewBox="0 0 20 24"><path d="M5 11V7a5 5 0 0 1 10 0v4" fill="none" stroke="#d0d0d0" stroke-width="2.600"/><rect x="1" y="10.500" width="18" height="13" rx="1.500" fill="#d0d0d0"/><circle cx="10" cy="16.500" r="2" fill="#656465"/></svg>
<div style="top:475.5px;height:32px;line-height:32px;font-size:21.2px;color:#e2e2e2;white-space:nowrap;left:1906px;">填充:</div>
<div style="left:1960px;top:474.5px;width:101.5px;height:33px;background:#525152;border:1.500px solid #6d6c6d;border-radius:5px;"></div>
<div style="left:2033px;top:475.5px;width:1.5px;height:31px;background:#6d6c6d;"></div>
<div style="top:475.0px;height:33px;line-height:33px;font-size:22px;color:#f4f4f4;white-space:nowrap;left:1966px;">100%</div>
<svg style="left:2041.0px;top:489.5px;" width="13" height="7" viewBox="0 0 13 7"><path d="M1 1L6.5 6L12 1" fill="none" stroke="#e8e8e8" stroke-width="2.2" stroke-linecap="round" stroke-linejoin="round"/></svg>
<div style="left:1633px;top:512px;width:439px;height:9px;background:#6b6a6b;"></div>
<div style="left:1633px;top:520.5px;width:439px;height:1.5px;background:#555455;"></div>
<div style="left:1692px;top:522.0px;width:350.5px;height:77px;background:#818081;"></div>
<div style="left:1633px;top:599.0px;width:409.5px;height:1.2px;background:#595859;"></div>
<svg style="left:1649.5px;top:553.0px;" width="25" height="16" viewBox="0 0 25 16"><path d="M0 8C5 1 9.500 0 12.500 0S20 1 25 8C20 15 15.500 16 12.500 16S5 15 0 8z" fill="#f2f2f2"/><circle cx="12.500" cy="8" r="5.500" fill="#5a595a"/><circle cx="10.800" cy="6.300" r="1.800" fill="#bdbdbd"/></svg>
<div style="left:1699px;top:530.5px;width:44.5px;height:60px;background-color:#fff;background-image:conic-gradient(#e9e9ee 25%,#fff 0 50%,#e9e9ee 0 75%,#fff 0);background-size:7px 7px;outline:1.500px solid #2b2b2b;"></div>
<svg style="left:1699px;top:530.5px;overflow:hidden;opacity:.75" width="44.500" height="60" viewBox="767 353 796 1073"><use href="#pan"/></svg>
<div style="left:1716.5px;top:564.0px;width:28px;height:27.5px;background:#121212;"></div>
<div style="left:1719px;top:566.5px;width:25.5px;height:25px;background:#6c6b6c;"></div>
<svg style="left:1720.5px;top:568.0px;" width="22" height="22" viewBox="0 0 22 22"><rect x="3" y="3" width="16" height="16" fill="none" stroke="#cfcfcf" stroke-width="2.200"/><rect x="0.5" y="0.5" width="6" height="6" fill="#6c6b6c" stroke="#cfcfcf" stroke-width="1.600"/><rect x="0.5" y="15.5" width="6" height="6" fill="#6c6b6c" stroke="#cfcfcf" stroke-width="1.600"/><rect x="15.5" y="0.5" width="6" height="6" fill="#6c6b6c" stroke="#cfcfcf" stroke-width="1.600"/><rect x="15.5" y="15.5" width="6" height="6" fill="#6c6b6c" stroke="#cfcfcf" stroke-width="1.600"/></svg>
<svg style="left:1694px;top:525.5px;" width="54.5" height="70" viewBox="0 0 54.5 70"><g fill="none" stroke="#f4f4f4" stroke-width="2"><path d="M1 17V1H17M37.500 1H53.500V17M53.500 53V69H37.500M17 69H1V53"/></g></svg>
<div style="top:545.5px;height:32px;line-height:32px;font-size:21px;color:#f2f2f2;white-space:nowrap;font-weight:500;left:1759px;">美洲豹 1</div>
<div style="left:1633px;top:677.1px;width:409.5px;height:1.2px;background:#595859;"></div>
<svg style="left:1649.5px;top:631.1px;" width="25" height="16" viewBox="0 0 25 16"><path d="M0 8C5 1 9.500 0 12.500 0S20 1 25 8C20 15 15.500 16 12.500 16S5 15 0 8z" fill="#f2f2f2"/><circle cx="12.500" cy="8" r="5.500" fill="#5a595a"/><circle cx="10.800" cy="6.300" r="1.800" fill="#bdbdbd"/></svg>
<div style="left:1699px;top:608.6px;width:44.5px;height:60px;background-color:#fff;background-image:conic-gradient(#e9e9ee 25%,#fff 0 50%,#e9e9ee 0 75%,#fff 0);background-size:7px 7px;outline:1.500px solid #2b2b2b;"></div>
<svg style="left:1699px;top:608.6px;overflow:hidden;opacity:.75" width="44.500" height="60" viewBox="767 353 796 1073"><g transform="translate(860,1000) scale(.2649)"><use href="#d3"/></g></svg>
<div style="left:1716.5px;top:642.1px;width:28px;height:27.5px;background:#121212;"></div>
<div style="left:1719px;top:644.6px;width:25.5px;height:25px;background:#5d5c5d;"></div>
<svg style="left:1720.5px;top:646.1px;" width="22" height="22" viewBox="0 0 22 22"><rect x="3" y="3" width="16" height="16" fill="none" stroke="#cfcfcf" stroke-width="2.200"/><rect x="0.5" y="0.5" width="6" height="6" fill="#5d5c5d" stroke="#cfcfcf" stroke-width="1.600"/><rect x="0.5" y="15.5" width="6" height="6" fill="#5d5c5d" stroke="#cfcfcf" stroke-width="1.600"/><rect x="15.5" y="0.5" width="6" height="6" fill="#5d5c5d" stroke="#cfcfcf" stroke-width="1.600"/><rect x="15.5" y="15.5" width="6" height="6" fill="#5d5c5d" stroke="#cfcfcf" stroke-width="1.600"/></svg>
<div style="top:623.6px;height:32px;line-height:32px;font-size:21px;color:#f2f2f2;white-space:nowrap;font-weight:500;left:1759px;">鹿 1</div>
<div style="left:1633px;top:755.2px;width:409.5px;height:1.2px;background:#595859;"></div>
<svg style="left:1649.5px;top:709.2px;" width="25" height="16" viewBox="0 0 25 16"><path d="M0 8C5 1 9.500 0 12.500 0S20 1 25 8C20 15 15.500 16 12.500 16S5 15 0 8z" fill="#f2f2f2"/><circle cx="12.500" cy="8" r="5.500" fill="#5a595a"/><circle cx="10.800" cy="6.300" r="1.800" fill="#bdbdbd"/></svg>
<div style="left:1699px;top:686.7px;width:44.5px;height:60px;background-color:#fff;background-image:conic-gradient(#e9e9ee 25%,#fff 0 50%,#e9e9ee 0 75%,#fff 0);background-size:7px 7px;outline:1.500px solid #2b2b2b;"></div>
<svg style="left:1699px;top:686.7px;overflow:hidden;opacity:.75" width="44.500" height="60" viewBox="767 353 796 1073"><g transform="translate(860,1000) scale(.2649)"><use href="#d2"/></g></svg>
<div style="left:1716.5px;top:720.2px;width:28px;height:27.5px;background:#121212;"></div>
<div style="left:1719px;top:722.7px;width:25.5px;height:25px;background:#5d5c5d;"></div>
<svg style="left:1720.5px;top:724.2px;" width="22" height="22" viewBox="0 0 22 22"><rect x="3" y="3" width="16" height="16" fill="none" stroke="#cfcfcf" stroke-width="2.200"/><rect x="0.5" y="0.5" width="6" height="6" fill="#5d5c5d" stroke="#cfcfcf" stroke-width="1.600"/><rect x="0.5" y="15.5" width="6" height="6" fill="#5d5c5d" stroke="#cfcfcf" stroke-width="1.600"/><rect x="15.5" y="0.5" width="6" height="6" fill="#5d5c5d" stroke="#cfcfcf" stroke-width="1.600"/><rect x="15.5" y="15.5" width="6" height="6" fill="#5d5c5d" stroke="#cfcfcf" stroke-width="1.600"/></svg>
<div style="top:701.7px;height:32px;line-height:32px;font-size:21px;color:#f2f2f2;white-space:nowrap;font-weight:500;left:1759px;">鹿 1 拷贝</div>
<div style="left:1633px;top:833.3px;width:409.5px;height:1.2px;background:#595859;"></div>
<svg style="left:1649.5px;top:787.3px;" width="25" height="16" viewBox="0 0 25 16"><path d="M0 8C5 1 9.500 0 12.500 0S20 1 25 8C20 15 15.500 16 12.500 16S5 15 0 8z" fill="#f2f2f2"/><circle cx="12.500" cy="8" r="5.500" fill="#5a595a"/><circle cx="10.800" cy="6.300" r="1.800" fill="#bdbdbd"/></svg>
<div style="left:1699px;top:764.8px;width:44.5px;height:60px;background-color:#fff;background-image:conic-gradient(#e9e9ee 25%,#fff 0 50%,#e9e9ee 0 75%,#fff 0);background-size:7px 7px;outline:1.500px solid #2b2b2b;"></div>
<svg style="left:1699px;top:764.8px;overflow:hidden;opacity:.75" width="44.500" height="60" viewBox="767 353 796 1073"><g transform="translate(860,1000) scale(.2649)"><use href="#d1"/></g></svg>
<div style="left:1716.5px;top:798.3px;width:28px;height:27.5px;background:#121212;"></div>
<div style="left:1719px;top:800.8px;width:25.5px;height:25px;background:#5d5c5d;"></div>
<svg style="left:1720.5px;top:802.3px;" width="22" height="22" viewBox="0 0 22 22"><rect x="3" y="3" width="16" height="16" fill="none" stroke="#cfcfcf" stroke-width="2.200"/><rect x="0.5" y="0.5" width="6" height="6" fill="#5d5c5d" stroke="#cfcfcf" stroke-width="1.600"/><rect x="0.5" y="15.5" width="6" height="6" fill="#5d5c5d" stroke="#cfcfcf" stroke-width="1.600"/><rect x="15.5" y="0.5" width="6" height="6" fill="#5d5c5d" stroke="#cfcfcf" stroke-width="1.600"/><rect x="15.5" y="15.5" width="6" height="6" fill="#5d5c5d" stroke="#cfcfcf" stroke-width="1.600"/></svg>
<div style="top:779.8px;height:32px;line-height:32px;font-size:21px;color:#f2f2f2;white-space:nowrap;font-weight:500;left:1759px;">鹿 1</div>
<div style="left:1633px;top:911.4px;width:409.5px;height:1.2px;background:#595859;"></div>
<svg style="left:1649.5px;top:865.4px;" width="25" height="16" viewBox="0 0 25 16"><path d="M0 8C5 1 9.500 0 12.500 0S20 1 25 8C20 15 15.500 16 12.500 16S5 15 0 8z" fill="#f2f2f2"/><circle cx="12.500" cy="8" r="5.500" fill="#5a595a"/><circle cx="10.800" cy="6.300" r="1.800" fill="#bdbdbd"/></svg>
<div style="left:1699px;top:842.9px;width:44.5px;height:60px;background-color:#fff;background-image:conic-gradient(#e9e9ee 25%,#fff 0 50%,#e9e9ee 0 75%,#fff 0);background-size:7px 7px;outline:1.500px solid #2b2b2b;"></div>
<svg style="left:1699px;top:842.9px;overflow:hidden;opacity:.75" width="44.500" height="60" viewBox="767 353 796 1073"><g transform="translate(860,1000) scale(.2649)"><use href="#d4"/></g></svg>
<div style="left:1716.5px;top:876.4px;width:28px;height:27.5px;background:#121212;"></div>
<div style="left:1719px;top:878.9px;width:25.5px;height:25px;background:#5d5c5d;"></div>
<svg style="left:1720.5px;top:880.4px;" width="22" height="22" viewBox="0 0 22 22"><rect x="3" y="3" width="16" height="16" fill="none" stroke="#cfcfcf" stroke-width="2.200"/><rect x="0.5" y="0.5" width="6" height="6" fill="#5d5c5d" stroke="#cfcfcf" stroke-width="1.600"/><rect x="0.5" y="15.5" width="6" height="6" fill="#5d5c5d" stroke="#cfcfcf" stroke-width="1.600"/><rect x="15.5" y="0.5" width="6" height="6" fill="#5d5c5d" stroke="#cfcfcf" stroke-width="1.600"/><rect x="15.5" y="15.5" width="6" height="6" fill="#5d5c5d" stroke="#cfcfcf" stroke-width="1.600"/></svg>
<div style="top:857.9px;height:32px;line-height:32px;font-size:21px;color:#f2f2f2;white-space:nowrap;font-weight:500;left:1759px;">鹿 1</div>
<div style="left:1633px;top:989.5px;width:409.5px;height:1.2px;background:#595859;"></div>
<svg style="left:1649.5px;top:943.5px;" width="25" height="16" viewBox="0 0 25 16"><path d="M0 8C5 1 9.500 0 12.500 0S20 1 25 8C20 15 15.500 16 12.500 16S5 15 0 8z" fill="#f2f2f2"/><circle cx="12.500" cy="8" r="5.500" fill="#5a595a"/><circle cx="10.800" cy="6.300" r="1.800" fill="#bdbdbd"/></svg>
<div style="left:1699px;top:921.0px;width:44.5px;height:60px;background-color:#fff;background-image:conic-gradient(#e9e9ee 25%,#fff 0 50%,#e9e9ee 0 75%,#fff 0);background-size:7px 7px;outline:1.500px solid #2b2b2b;"></div>
<svg style="left:1699px;top:921.0px;overflow:hidden;opacity:.75" width="44.500" height="60" viewBox="767 353 796 1073"><use href="#stag"/></svg>
<div style="left:1716.5px;top:954.5px;width:28px;height:27.5px;background:#121212;"></div>
<div style="left:1719px;top:957.0px;width:25.5px;height:25px;background:#5d5c5d;"></div>
<svg style="left:1720.5px;top:958.5px;" width="22" height="22" viewBox="0 0 22 22"><rect x="3" y="3" width="16" height="16" fill="none" stroke="#cfcfcf" stroke-width="2.200"/><rect x="0.5" y="0.5" width="6" height="6" fill="#5d5c5d" stroke="#cfcfcf" stroke-width="1.600"/><rect x="0.5" y="15.5" width="6" height="6" fill="#5d5c5d" stroke="#cfcfcf" stroke-width="1.600"/><rect x="15.5" y="0.5" width="6" height="6" fill="#5d5c5d" stroke="#cfcfcf" stroke-width="1.600"/><rect x="15.5" y="15.5" width="6" height="6" fill="#5d5c5d" stroke="#cfcfcf" stroke-width="1.600"/></svg>
<div style="top:936.0px;height:32px;line-height:32px;font-size:21px;color:#f2f2f2;white-space:nowrap;font-weight:500;left:1759px;">牡鹿 1</div>
<div style="left:1633px;top:1067.6px;width:409.5px;height:1.2px;background:#595859;"></div>
<svg style="left:1649.5px;top:1021.6px;" width="25" height="16" viewBox="0 0 25 16"><path d="M0 8C5 1 9.500 0 12.500 0S20 1 25 8C20 15 15.500 16 12.500 16S5 15 0 8z" fill="#f2f2f2"/><circle cx="12.500" cy="8" r="5.500" fill="#5a595a"/><circle cx="10.800" cy="6.300" r="1.800" fill="#bdbdbd"/></svg>
<div style="left:1699px;top:999.0999999999999px;width:44.5px;height:60px;background:#fff;outline:1.500px solid #2b2b2b;"></div>
<svg style="left:1990.5px;top:1016.6px;" width="20" height="24" viewBox="0 0 20 24"><path d="M5.500 11V7.500a4.500 4.500 0 0 1 9 0V11" fill="none" stroke="#e0e0e0" stroke-width="2.200"/><rect x="1.600" y="10.600" width="16.800" height="12" rx="1.500" fill="none" stroke="#e0e0e0" stroke-width="2.200"/><rect x="8.500" y="15" width="3" height="3.500" fill="#e0e0e0"/></svg>
<div style="top:1014.1px;height:32px;line-height:32px;font-size:21px;color:#f2f2f2;white-space:nowrap;font-weight:500;left:1759px;">背景</div>
<div style="left:1690.5px;top:522px;width:1.2px;height:547px;background:#595859;"></div>
<div style="left:1633px;top:1427px;width:439px;height:1.5px;background:#4f4e4f;"></div>
<div style="left:1633px;top:1428.5px;width:439px;height:47px;background:#646364;"></div>
<div style="left:1633px;top:1475.5px;width:439px;height:14.5px;background:#5b5a5b;border-radius:0 0 2px 2px;"></div>
<svg style="left:1832px;top:1480px;" width="40" height="6" viewBox="0 0 40 6"><path d="M0 3H40" stroke="#4c4b4c" stroke-width="6" stroke-dasharray="1.500 1.500"/></svg>
<svg style="left:1684.5px;top:1445.5px;" width="27" height="13" viewBox="0 0 27 13"><g fill="none" stroke="#a9a8a9" stroke-width="2.200"><path d="M11 1.200H6.500a5.300 5.300 0 0 0 0 10.600H11M16 1.200h4.500a5.300 5.300 0 0 1 0 10.600H16M8 6.500H19"/></g></svg>
<div style="left:1730px;top:1432px;width:36px;height:36px;line-height:36px;text-align:center;font-size:25px;font-style:italic;color:#dcdcdc;">fx</div>
<svg style="left:1761px;top:1463px;" width="8" height="4" viewBox="0 0 8 4"><path d="M0 0H8L4 4z" fill="#dcdcdc"/></svg>
<svg style="left:1789.5px;top:1442.0px;" width="25" height="19" viewBox="0 0 25 19"><rect width="25" height="19" fill="#dcdcdc"/><circle cx="12.500" cy="9.500" r="5" fill="#646364"/></svg>
<svg style="left:1842.5px;top:1441.0px;" width="21" height="21" viewBox="0 0 21 21"><circle cx="10.500" cy="10.500" r="9.300" fill="none" stroke="#dcdcdc" stroke-width="2.200"/><path d="M4 17A9.300 9.300 0 0 0 17 4z" fill="#dcdcdc"/></svg>
<svg style="left:1864px;top:1463px;" width="8" height="4" viewBox="0 0 8 4"><path d="M0 0H8L4 4z" fill="#dcdcdc"/></svg>
<svg style="left:1891.5px;top:1440.5px;" width="25" height="21" viewBox="0 0 25 21"><path d="M0 3.500C0 2 1 1 2.500 1H9L11.500 4H0z" fill="#dcdcdc"/><rect x="0" y="5" width="25" height="16" rx="1.500" fill="#dcdcdc"/></svg>
<svg style="left:1944.5px;top:1441.0px;" width="22" height="22" viewBox="0 0 22 22"><rect x="1.200" y="1.200" width="19.600" height="19.600" fill="none" stroke="#dcdcdc" stroke-width="2.200"/><path d="M11 6V16M6 11H16" stroke="#dcdcdc" stroke-width="3"/></svg>
<svg style="left:1996.5px;top:1438.5px;" width="20" height="25" viewBox="0 0 20 25"><path d="M1 5H19M7 5V2.200H13V5" fill="none" stroke="#dcdcdc" stroke-width="2"/><path d="M3 6.500H17L16 24H4z" fill="none" stroke="#dcdcdc" stroke-width="2"/><path d="M7.500 9V21M10 9V21M12.500 9V21" stroke="#dcdcdc" stroke-width="1.600"/></svg>
<svg style="left:2229.5px;top:159.0px;" width="13" height="10" viewBox="0 0 13 10"><path d="M5 1l-4 4 4 4M12 1l-4 4 4 4" fill="none" stroke="#dcdcdc" stroke-width="1.800"/></svg>
<svg style="left:2772.5px;top:159.0px;" width="13" height="10" viewBox="0 0 13 10"><path d="M1 1l4 4-4 4M8 1l4 4-4 4" fill="none" stroke="#dcdcdc" stroke-width="1.800"/></svg>
<svg style="left:2202px;top:183px;" width="30" height="4" viewBox="0 0 30 4"><path d="M0 2H30" stroke="#565556" stroke-width="4" stroke-dasharray="1.500 1.500"/></svg>
<svg style="left:2203.5px;top:201.5px;" width="32" height="36" viewBox="0 0 32 36"><g fill="none" stroke="#e6e6e6" stroke-width="1.800"><rect x="1" y="1" width="9" height="9"/><rect x="1" y="13" width="9" height="9"/></g><rect x="3.500" y="15.500" width="4" height="4" fill="#222"/><rect x="0" y="25" width="11" height="10" fill="#e6e6e6"/><path d="M17 8c8 0 12 6 11 13-1 6-5 10-10 12 4-4 6-8 5.500-12C23 16 21 13 17 13z" fill="#e6e6e6"/><path d="M13 10.500l8-7v13z" fill="#e6e6e6"/></svg>
<div style="left:2260px;top:177px;width:541px;height:303px;background:#676667;"></div>
<div style="left:2260px;top:177px;width:541px;height:51px;background:#555455;"></div>
<div style="left:2260px;top:177px;width:76px;height:52px;background:#676667;"></div>
<div style="top:186.0px;height:32px;line-height:32px;font-size:21.3px;color:#f4f4f4;white-space:nowrap;font-weight:700;left:2276px;">颜色</div>
<div style="top:186.0px;height:32px;line-height:32px;font-size:21.3px;color:#c4c4c4;white-space:nowrap;left:2353px;">色板</div>
<div style="left:2411px;top:177px;width:1.5px;height:51px;background:#504f50;"></div>
<div style="top:186.0px;height:32px;line-height:32px;font-size:21.3px;color:#c4c4c4;white-space:nowrap;left:2429px;">渐变</div>
<div style="left:2490px;top:177px;width:1.5px;height:51px;background:#504f50;"></div>
<div style="top:186.0px;height:32px;line-height:32px;font-size:21.3px;color:#c4c4c4;white-space:nowrap;left:2508px;">图案</div>
<div style="left:2568px;top:177px;width:1.5px;height:51px;background:#504f50;"></div>
<svg style="left:2770px;top:195.5px;" width="21" height="14" viewBox="0 0 21 14"><path d="M0 1H21M0 5H21M0 9H21M0 13H21" stroke="#c9c9c9" stroke-width="1.700"/></svg>
<div style="left:2296px;top:268px;width:37.5px;height:37.5px;background:#fff;border:1.500px solid #2e2e2e;border-radius:2px;"></div>
<div style="left:2277px;top:250px;width:36.5px;height:36.5px;background:#121113;border:2.500px solid #efefef;outline:1.500px solid #8a898a;"></div>
<div style="left:2344.500px;top:242.500px;width:355.500px;height:203px;background:linear-gradient(to top,#000,rgba(0,0,0,0)),linear-gradient(to right,#fff,#ff0030);"></div>
<svg style="left:2344px;top:431px;overflow:hidden;" width="16" height="16" viewBox="0 0 16 16"><circle cx="1" cy="14" r="11" fill="none" stroke="#f4f4f4" stroke-width="2.200" clip-path="inset(0)"/></svg>
<div style="left:2733px;top:242.500px;width:36px;height:203px;background:linear-gradient(to bottom,#ff0040 0%,#ff00ff 16%,#0000ff 33%,#00ffff 50%,#00ff00 67%,#ffff00 84%,#ff0000 100%);"></div>
<svg style="left:2715px;top:437px;" width="14" height="16" viewBox="0 0 14 16"><path d="M1 1L13 8L1 15z" fill="#fff" stroke="#333" stroke-width="1.200" stroke-linejoin="round"/></svg>
<div style="left:2260px;top:487px;width:541px;height:556px;background:#676667;"></div>
<div style="left:2260px;top:487px;width:541px;height:50.5px;background:#555455;"></div>
<div style="left:2260px;top:487px;width:75px;height:51.5px;background:#676667;"></div>
<div style="top:495.8px;height:32px;line-height:32px;font-size:21.3px;color:#f4f4f4;white-space:nowrap;font-weight:700;left:2276px;">属性</div>
<div style="top:495.8px;height:32px;line-height:32px;font-size:21.3px;color:#c4c4c4;white-space:nowrap;left:2352px;">调整</div>
<div style="left:2412px;top:487px;width:1.5px;height:50.5px;background:#504f50;"></div>
<div style="top:495.8px;height:32px;line-height:32px;font-size:21.3px;color:#c4c4c4;white-space:nowrap;left:2430px;">库</div>
<div style="left:2489px;top:487px;width:1.5px;height:50.5px;background:#504f50;"></div>
<svg style="left:2770px;top:505.25px;" width="21" height="14" viewBox="0 0 21 14"><path d="M0 1H21M0 5H21M0 9H21M0 13H21" stroke="#c9c9c9" stroke-width="1.700"/></svg>
<div style="left:2280px;top:551px;width:42px;height:42px;background:#4b4a4b;border-radius:3px;"></div>
<svg style="left:2285.0px;top:561.0px;" width="32" height="24" viewBox="0 0 32 24"><rect width="32" height="24" fill="#f2f2f2"/><circle cx="16" cy="12" r="7" fill="#4b4a4b"/></svg>
<div style="top:557.5px;height:32px;line-height:32px;font-size:21.3px;color:#f0f0f0;white-space:nowrap;font-weight:500;left:2332px;">蒙版</div>
<div style="left:2260px;top:602.5px;width:541px;height:1.5px;background:#595859;"></div>
<div style="left:2280px;top:619.5px;width:45.5px;height:61px;background:#8e8d8e;border:1.500px solid #5a595a;"></div>
<svg style="left:2291px;top:657px;" width="14" height="8" viewBox="0 0 14 8"><path d="M1 1c3 5 8 5 12 1" fill="none" stroke="#5c5b5c" stroke-width="1.800"/></svg>
<div style="top:634.0px;height:32px;line-height:32px;font-size:21.3px;color:#f0f0f0;white-space:nowrap;font-weight:500;left:2340px;">形状路径</div>
<svg style="left:2674.0px;top:636.0px;" width="32" height="28" viewBox="0 0 32 28"><rect x="0" y="1" width="24" height="18" fill="#efefef"/><circle cx="12" cy="10" r="5.500" fill="#676667"/><rect x="15" y="11" width="16" height="16" fill="#efefef" stroke="#676667" stroke-width="1.500"/><path d="M23 14.500V23.500M18.500 19H27.500" stroke="#676667" stroke-width="2.200"/></svg>
<div style="left:2714px;top:628.5px;width:41.5px;height:42px;background:#4b4a4b;border-radius:3px;"></div>
<svg style="left:2721.0px;top:636.5px;" width="28" height="26" viewBox="0 0 28 26"><path d="M0 0H7V2H21V0H28V7H26V19H28V26H21V24H7V26H0V19H2V7H0z" fill="#efefef"/><circle cx="14" cy="13" r="5.500" fill="#4b4a4b"/></svg>
<div style="left:2260px;top:709.5px;width:515px;height:1.5px;background:#595859;"></div>
<div style="left:2777px;top:611px;width:18px;height:268px;background:#757475;border-radius:9px;"></div>
<div style="top:743.5px;height:32px;line-height:32px;font-size:21.3px;color:#e8e8e8;white-space:nowrap;left:2282px;">密度:</div>
<div style="left:2635px;top:744px;width:109.5px;height:29.5px;background:#565556;border:1.500px solid #706f70;"></div>
<div style="top:743.5px;height:32px;line-height:32px;font-size:21.5px;color:#f4f4f4;white-space:nowrap;left:2641px;">100%</div>
<div style="left:2291px;top:781.5px;width:448px;height:5px;background:#807f80;border-radius:2px;"></div>
<svg style="left:2729px;top:786px;" width="22" height="22" viewBox="0 0 22 22"><path d="M11 0.800L21.500 15V21.200H0.500V15z" fill="#fff" stroke="#2a2a2a" stroke-width="1.400" stroke-linejoin="round"/></svg>
<div style="top:851.5px;height:32px;line-height:32px;font-size:21.3px;color:#e8e8e8;white-space:nowrap;left:2282px;">羽化:</div>
<div style="left:2635px;top:853px;width:109.5px;height:29.5px;background:#565556;border:1.500px solid #706f70;"></div>
<div style="top:852.0px;height:32px;line-height:32px;font-size:21.5px;color:#f4f4f4;white-space:nowrap;left:2641px;">0.0 像素</div>
<div style="left:2291px;top:889.5px;width:448px;height:5px;background:#807f80;border-radius:2px;"></div>
<svg style="left:2276.5px;top:895px;" width="22" height="22" viewBox="0 0 22 22"><path d="M11 0.800L21.500 15V21.200H0.500V15z" fill="#fff" stroke="#2a2a2a" stroke-width="1.400" stroke-linejoin="round"/></svg>
<div style="top:956.5px;height:32px;line-height:32px;font-size:21.3px;color:#8d8c8d;white-space:nowrap;left:2274px;">调整:</div>
<div style="left:2260px;top:996.5px;width:541px;height:1.5px;background:#565556;"></div>
<div style="left:2652.5px;top:998px;width:52px;height:45px;background:#555455;"></div>
<svg style="left:2557.0px;top:1008.5px;" width="22" height="22" viewBox="0 0 22 22"><rect x="1.500" y="1.500" width="19" height="19" fill="none" stroke="#d6d6d6" stroke-width="2.400" stroke-dasharray="4 3.500"/></svg>
<svg style="left:2608.5px;top:1007.5px;" width="28" height="24" viewBox="0 0 28 24"><path d="M14 6L26 15L14 23L2 15z" fill="none" stroke="#9b9a9b" stroke-width="2.200"/><path d="M14 2V14M10 10l4 4.500 4-4.500" fill="none" stroke="#9b9a9b" stroke-width="2"/></svg>
<svg style="left:2664.5px;top:1011.0px;" width="27" height="17" viewBox="0 0 27 17"><path d="M0 8.500C5 1 10 0 13.500 0S22 1 27 8.500C22 16 17 17 13.500 17S5 16 0 8.500z" fill="#f4f4f4"/><circle cx="13.500" cy="8.500" r="5.800" fill="#555455"/><circle cx="11.800" cy="6.800" r="1.800" fill="#c6c6c6"/></svg>
<svg style="left:2723.0px;top:1006.5px;" width="20" height="25" viewBox="0 0 20 25"><path d="M1 5H19M7 5V2.200H13V5" fill="none" stroke="#9b9a9b" stroke-width="2"/><path d="M3 6.500H17L16 24H4z" fill="none" stroke="#9b9a9b" stroke-width="2"/><path d="M7.500 9V21M10 9V21M12.500 9V21" stroke="#9b9a9b" stroke-width="1.600"/></svg>
<div style="left:2260px;top:1049px;width:541px;height:555px;background:#605f60;"></div>
<div style="left:2260px;top:1049px;width:541px;height:52.5px;background:#555455;"></div>
<div style="top:1058.8px;height:32px;line-height:32px;font-size:21.3px;color:#c4c4c4;white-space:nowrap;left:2277px;">通道</div>
<div style="left:2336px;top:1049px;width:1.5px;height:52.5px;background:#504f50;"></div>
<div style="left:2337px;top:1049px;width:76px;height:53.5px;background:#676667;"></div>
<div style="top:1058.8px;height:32px;line-height:32px;font-size:21.3px;color:#f4f4f4;white-space:nowrap;font-weight:700;left:2353px;">路径</div>
<svg style="left:2770px;top:1068.25px;" width="21" height="14" viewBox="0 0 21 14"><path d="M0 1H21M0 5H21M0 9H21M0 13H21" stroke="#c9c9c9" stroke-width="1.700"/></svg>
<div style="left:2260px;top:1112px;width:508.5px;height:69px;background:#818081;"></div>
<div style="left:2265px;top:1115.5px;width:44.5px;height:61px;background:#8c8b8c;border:1.500px solid #4a494a;"></div>
<svg style="left:2276px;top:1153px;" width="14" height="8" viewBox="0 0 14 8"><path d="M1 1c3 5 8 5 12 1" fill="none" stroke="#d8d8d8" stroke-width="1.600"/><path d="M1 1c2 2 4 2 5 1" fill="none" stroke="#333" stroke-width="1.600"/></svg>
<div style="top:1128.5px;height:32px;line-height:32px;font-size:21.4px;color:#f4f4f4;white-space:nowrap;font-weight:500;left:2317.5px;">美洲豹 1形状路径</div>
<div style="left:2260px;top:1561.5px;width:541px;height:1.5px;background:#4f4e4f;"></div>
<div style="left:2260px;top:1563px;width:541px;height:41px;background:#646364;"></div>
<div style="left:2410.5px;top:1574.0px;width:21px;height:21px;background:#aeadae;border-radius:50%;"></div>
<div style="left:2462.5px;top:1574.0px;width:21px;height:21px;border-radius:50%;border:2px solid #c2c1c2;"></div>
<svg style="left:2512.0px;top:1572.5px;" width="24" height="24" viewBox="0 0 24 24"><circle cx="12" cy="12" r="10.500" fill="none" stroke="#9f9e9f" stroke-width="2.400" stroke-dasharray="3 3.600"/></svg>
<svg style="left:2560.5px;top:1569.5px;" width="30" height="30" viewBox="0 0 30 30"><circle cx="15" cy="15" r="9.500" fill="none" stroke="#bbbabb" stroke-width="2.200"/><g fill="#bbbabb"><rect x="12" y="1" width="6" height="6"/><rect x="12" y="23" width="6" height="6"/><rect x="1" y="12" width="6" height="6"/><rect x="23" y="12" width="6" height="6"/></g></svg>
<svg style="left:2614.0px;top:1575.0px;" width="26" height="19" viewBox="0 0 26 19"><rect width="26" height="19" fill="#f0f0f0"/><circle cx="13" cy="9.500" r="5" fill="#646364"/></svg>
<svg style="left:2672.0px;top:1573.0px;" width="23" height="23" viewBox="0 0 23 23"><rect x="1.200" y="1.200" width="20.600" height="20.600" fill="none" stroke="#f0f0f0" stroke-width="2.200"/><path d="M11.500 6V17M6 11.500H17" stroke="#f0f0f0" stroke-width="3"/></svg>
<svg style="left:2724.5px;top:1572.0px;" width="20" height="25" viewBox="0 0 20 25"><path d="M1 5H19M7 5V2.200H13V5" fill="none" stroke="#9b9a9b" stroke-width="2"/><path d="M3 6.500H17L16 24H4z" fill="none" stroke="#9b9a9b" stroke-width="2"/><path d="M7.500 9V21M10 9V21M12.500 9V21" stroke="#9b9a9b" stroke-width="1.600"/></svg>
<svg style="left:2829.0px;top:790.5px;" width="12" height="26" viewBox="0 0 12 26"><path d="M10.500 1.500L2 13L10.500 24.500" fill="none" stroke="#8a8a8a" stroke-width="2.400"/></svg>
<div style="top:83.5px;height:33px;line-height:33px;font-size:22px;color:#ececec;white-space:nowrap;font-weight:700;left:2852px;">g</div>
<div style="top:444.5px;height:33px;line-height:33px;font-size:22px;color:#ececec;white-space:nowrap;font-weight:700;left:2852px;">g</div>
<div style="top:780.5px;height:33px;line-height:33px;font-size:22px;color:#ececec;white-space:nowrap;font-weight:700;left:2852px;">d</div>
<div style="top:1054.5px;height:33px;line-height:33px;font-size:22px;color:#ececec;white-space:nowrap;font-weight:700;left:2852px;">4</div>
<div style="top:1242.5px;height:33px;line-height:33px;font-size:22px;color:#ececec;white-space:nowrap;font-weight:700;left:2852px;">0</div>
<div style="left:1077px;top:1454.500px;height:80px;line-height:80px;font-size:55px;font-weight:500;color:#fff;white-space:nowrap;letter-spacing:40.900px;transform:scaleX(.69);transform-origin:0 0;font-family:'Noto Sans CJK SC',sans-serif;text-shadow:0 0 2px rgba(0,0,0,.6);">可以起到约束角度的作用</div>
</div></body></html>
